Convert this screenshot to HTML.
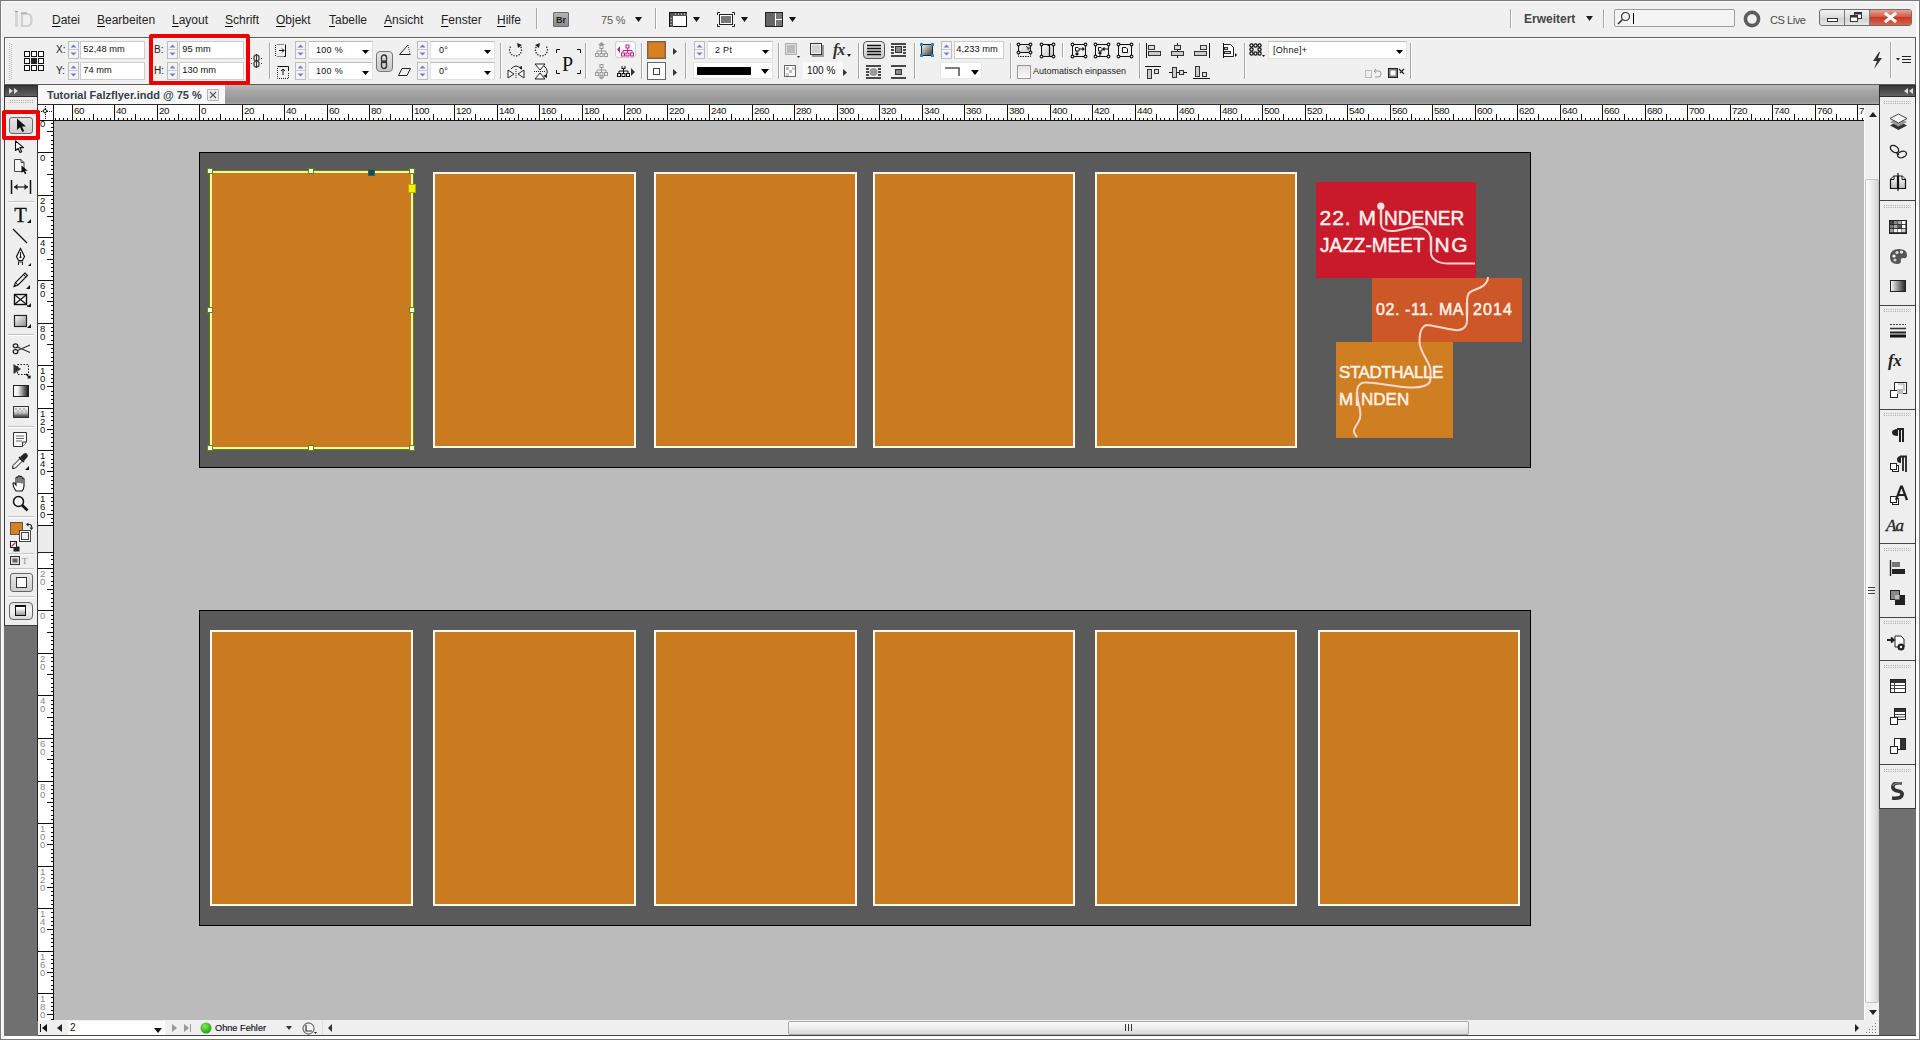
<!DOCTYPE html><html><head><meta charset="utf-8"><style>
*{margin:0;padding:0;box-sizing:border-box}
html,body{width:1920px;height:1040px;overflow:hidden}
body{position:relative;background:#f0f0f0;font-family:"Liberation Sans",sans-serif;color:#000}
.a{position:absolute}
.u{text-decoration:underline;text-underline-offset:2px}
.menu{position:absolute;top:11px;font-size:12px;color:#1a1a1a;line-height:16px}
.menu span{text-decoration:underline}
</style></head><body><div style="position:absolute;left:0px;top:0px;width:1920px;height:1px;background:#7a7a7a"></div><div style="position:absolute;left:0px;top:0px;width:1px;height:1040px;background:#7a7a7a"></div><div style="position:absolute;left:1919px;top:0px;width:1px;height:1040px;background:#7a7a7a"></div><div style="position:absolute;left:0px;top:1039px;width:1920px;height:1px;background:#7a7a7a"></div><div style="position:absolute;left:1px;top:1px;width:1918px;height:1px;background:#fbfbfb"></div><div style="position:absolute;left:1px;top:1px;width:1px;height:1038px;background:#fbfbfb"></div><svg style="position:absolute;left:11px;top:9px;" width="24" height="20" viewBox="0 0 24 20"><rect x="4" y="2" width="3" height="16" fill="#d6d6d6"/><rect x="4" y="2" width="3" height="1" fill="#9a9a9a"/><path d="M11 5H16.5Q20.5 5 20.5 10.5Q20.5 17 16.5 17H11Z" fill="none" stroke="#cfcfcf" stroke-width="2.2"/><path d="M10 4H16" stroke="#999" stroke-width="1"/></svg><div style="position:absolute;left:52px;top:13.84px;font-size:12px;line-height:12px;white-space:nowrap;color:#1e1e1e"><span style="text-decoration:underline;text-decoration-thickness:1px;text-underline-offset:2px;text-decoration-color:#000">D</span>atei</div><div style="position:absolute;left:97px;top:13.84px;font-size:12px;line-height:12px;white-space:nowrap;color:#1e1e1e"><span style="text-decoration:underline;text-decoration-thickness:1px;text-underline-offset:2px;text-decoration-color:#000">B</span>earbeiten</div><div style="position:absolute;left:172px;top:13.84px;font-size:12px;line-height:12px;white-space:nowrap;color:#1e1e1e"><span style="text-decoration:underline;text-decoration-thickness:1px;text-underline-offset:2px;text-decoration-color:#000">L</span>ayout</div><div style="position:absolute;left:225px;top:13.84px;font-size:12px;line-height:12px;white-space:nowrap;color:#1e1e1e"><span style="text-decoration:underline;text-decoration-thickness:1px;text-underline-offset:2px;text-decoration-color:#000">S</span>chrift</div><div style="position:absolute;left:276px;top:13.84px;font-size:12px;line-height:12px;white-space:nowrap;color:#1e1e1e"><span style="text-decoration:underline;text-decoration-thickness:1px;text-underline-offset:2px;text-decoration-color:#000">O</span>bjekt</div><div style="position:absolute;left:329px;top:13.84px;font-size:12px;line-height:12px;white-space:nowrap;color:#1e1e1e"><span style="text-decoration:underline;text-decoration-thickness:1px;text-underline-offset:2px;text-decoration-color:#000">T</span>abelle</div><div style="position:absolute;left:384px;top:13.84px;font-size:12px;line-height:12px;white-space:nowrap;color:#1e1e1e"><span style="text-decoration:underline;text-decoration-thickness:1px;text-underline-offset:2px;text-decoration-color:#000">A</span>nsicht</div><div style="position:absolute;left:441px;top:13.84px;font-size:12px;line-height:12px;white-space:nowrap;color:#1e1e1e"><span style="text-decoration:underline;text-decoration-thickness:1px;text-underline-offset:2px;text-decoration-color:#000">F</span>enster</div><div style="position:absolute;left:497px;top:13.84px;font-size:12px;line-height:12px;white-space:nowrap;color:#1e1e1e"><span style="text-decoration:underline;text-decoration-thickness:1px;text-underline-offset:2px;text-decoration-color:#000">H</span>ilfe</div><div style="position:absolute;left:536px;top:8px;width:1px;height:21px;background:#a8a8a8;box-shadow:1px 0 0 #fdfdfd"></div><div style="position:absolute;left:553px;top:12px;width:16px;height:15px;background:linear-gradient(#b4b4b4,#8c8c8c);border:1px solid #6a6a6a;border-radius:1px"><div style="position:absolute;left:2px;top:2px;font-size:9px;font-weight:bold;color:#222;line-height:10px">Br</div></div><div style="position:absolute;left:601px;top:14.69px;font-size:11px;line-height:11px;white-space:nowrap;color:#5a5a5a;letter-spacing:-0.2px">75 %</div><svg style="position:absolute;left:635px;top:17px;" width="7" height="5" viewBox="0 0 7 5"><path d="M0 0H7L3.5 5Z" fill="#111"/></svg><div style="position:absolute;left:655px;top:8px;width:1px;height:21px;background:#a8a8a8;box-shadow:1px 0 0 #fdfdfd"></div><svg style="position:absolute;left:669px;top:12px;" width="19" height="16" viewBox="0 0 19 16"><rect x="0.5" y="0.5" width="17" height="14" fill="#fff" stroke="#111"/><rect x="1" y="1" width="17" height="3" fill="#555"/><rect x="1" y="1" width="3" height="14" fill="#555"/><path d="M6 2h1M9 2h1M12 2h1M15 2h1M2 6v1M2 9v1M2 12v1" stroke="#fff"/></svg><svg style="position:absolute;left:693px;top:17px;" width="7" height="5" viewBox="0 0 7 5"><path d="M0 0H7L3.5 5Z" fill="#111"/></svg><svg style="position:absolute;left:717px;top:12px;" width="19" height="16" viewBox="0 0 19 16"><path d="M0.5 3V0.5H3M15 0.5H17.5V3M17.5 12V14.5H15M3 14.5H0.5V12" fill="none" stroke="#222"/><rect x="2.5" y="2.5" width="13" height="10" fill="#fff" stroke="#222"/><rect x="4" y="4" width="10" height="7" fill="#777"/></svg><svg style="position:absolute;left:741px;top:17px;" width="7" height="5" viewBox="0 0 7 5"><path d="M0 0H7L3.5 5Z" fill="#111"/></svg><svg style="position:absolute;left:765px;top:12px;" width="19" height="16" viewBox="0 0 19 16"><rect x="0.5" y="0.5" width="17" height="14" fill="#fff" stroke="#222"/><rect x="1" y="1" width="9" height="13" fill="#666"/><rect x="11" y="1" width="6" height="6" fill="#777"/><rect x="11" y="8" width="6" height="6" fill="#777"/></svg><svg style="position:absolute;left:789px;top:17px;" width="7" height="5" viewBox="0 0 7 5"><path d="M0 0H7L3.5 5Z" fill="#111"/></svg><div style="position:absolute;left:1510px;top:9px;width:1px;height:19px;background:#a8a8a8;box-shadow:1px 0 0 #fdfdfd"></div><div style="position:absolute;left:1524px;top:12.84px;font-size:12px;line-height:12px;white-space:nowrap;font-weight:bold;color:#444">Erweitert</div><svg style="position:absolute;left:1586px;top:16px;" width="7" height="5" viewBox="0 0 7 5"><path d="M0 0H7L3.5 5Z" fill="#222"/></svg><div style="position:absolute;left:1603px;top:9px;width:1px;height:19px;background:#a8a8a8;box-shadow:1px 0 0 #fdfdfd"></div><div style="position:absolute;left:1614px;top:9px;width:121px;height:18px;background:#f4f4f4;border:1px solid #9c9c9c;border-radius:2px"></div><svg style="position:absolute;left:1617px;top:11px;" width="14" height="14" viewBox="0 0 14 14"><circle cx="8.5" cy="5.5" r="4" fill="none" stroke="#333" stroke-width="1.2"/><path d="M5.5 8.5L1 13" stroke="#333" stroke-width="1.6"/></svg><div style="position:absolute;left:1633px;top:13px;width:1px;height:11px;background:#000"></div><svg style="position:absolute;left:1743px;top:10px;" width="18" height="18" viewBox="0 0 18 18"><circle cx="9" cy="9" r="6.6" fill="none" stroke="#5e5e5e" stroke-width="3.6"/></svg><div style="position:absolute;left:1770px;top:14.69px;font-size:11px;line-height:11px;white-space:nowrap;color:#4a4a4a;letter-spacing:-0.45px">CS Live</div><div style="position:absolute;left:1819px;top:9px;width:93px;height:17px;border:1px solid #6f6f6f;border-radius:3px;overflow:hidden;background:linear-gradient(#f3f3f3,#dcdcdc 50%,#cfcfcf 51%,#e6e6e6)"><div style="position:absolute;left:24px;top:0;width:1px;height:15px;background:#777"></div><div style="position:absolute;left:49px;top:0;width:1px;height:15px;background:#777"></div><div style="position:absolute;left:50px;top:0;width:41px;height:15px;background:linear-gradient(#e8a296,#d45b4a 45%,#c63a27 50%,#d9644c)"></div><div style="position:absolute;left:7px;top:8px;width:11px;height:4px;border:1px solid #333;background:#fff"></div><svg style="position:absolute;left:30px;top:2px" width="13" height="11"><rect x="4.5" y="0.5" width="7" height="6" fill="#fff" stroke="#333"/><rect x="0.5" y="3.5" width="7" height="6" fill="#fff" stroke="#333"/><rect x="1" y="4" width="6" height="1.5" fill="#333"/><rect x="5" y="1" width="6" height="1.5" fill="#333"/></svg><svg style="position:absolute;left:63px;top:2px" width="15" height="11"><path d="M2 1L13 10M13 1L2 10" stroke="#fff" stroke-width="3"/><path d="M2 1L13 10M13 1L2 10" stroke="#fff" stroke-width="2" /></svg></div><div style="position:absolute;left:4px;top:37px;width:1912px;height:48px;border:1px solid #5d5d5d;background:#f0f0f0;box-shadow:inset 1px 1px 0 #fff"></div><svg style="position:absolute;left:9px;top:43px;" width="4" height="37" viewBox="0 0 4 37"><path d="M0.5 0V37M2.5 1V37" stroke="#b5b5b5" stroke-dasharray="1 1"/></svg><svg style="position:absolute;left:24px;top:51px;" width="20" height="20" viewBox="0 0 20 20"><rect x="0.5" y="0.5" width="5" height="5" fill="#fff" stroke="#111"/><rect x="0.5" y="7.5" width="5" height="5" fill="#fff" stroke="#111"/><rect x="0.5" y="14.5" width="5" height="5" fill="#fff" stroke="#111"/><rect x="7.5" y="0.5" width="5" height="5" fill="#fff" stroke="#111"/><rect x="7.5" y="7.5" width="5" height="5" fill="#222" stroke="#222"/><rect x="7.5" y="14.5" width="5" height="5" fill="#fff" stroke="#111"/><rect x="14.5" y="0.5" width="5" height="5" fill="#fff" stroke="#111"/><rect x="14.5" y="7.5" width="5" height="5" fill="#fff" stroke="#111"/><rect x="14.5" y="14.5" width="5" height="5" fill="#fff" stroke="#111"/></svg><div style="position:absolute;left:56px;top:45.03px;font-size:10px;line-height:10px;white-space:nowrap;color:#222">X:</div><div style="position:absolute;left:56px;top:66.03px;font-size:10px;line-height:10px;white-space:nowrap;color:#222">Y:</div><div style="position:absolute;left:68px;top:41px;width:11px;height:18px;border:1px solid #bdbdbd;background:#f4f4f4"><svg style="position:absolute;left:0;top:0" width="9" height="16"><path d="M1.5 5.5H7.5L4.5 2.5Z" fill="#7a7ac8"/><path d="M1.5 10.5H7.5L4.5 13.5Z" fill="#7a7ac8"/><path d="M0 7.5H9" stroke="#c8c8c8"/></svg></div><div style="position:absolute;left:68px;top:62px;width:11px;height:18px;border:1px solid #bdbdbd;background:#f4f4f4"><svg style="position:absolute;left:0;top:0" width="9" height="16"><path d="M1.5 5.5H7.5L4.5 2.5Z" fill="#7a7ac8"/><path d="M1.5 10.5H7.5L4.5 13.5Z" fill="#7a7ac8"/><path d="M0 7.5H9" stroke="#c8c8c8"/></svg></div><div style="position:absolute;left:80px;top:41px;width:65px;height:18px;background:#fff;border:1px solid #cdcdcd;"><div style="position:absolute;left:2.3px;top:2.93px;font-size:9.3px;line-height:9.3px;white-space:nowrap;color:#111">52,48 mm</div></div><div style="position:absolute;left:80px;top:62px;width:65px;height:18px;background:#fff;border:1px solid #cdcdcd;"><div style="position:absolute;left:2.3px;top:2.93px;font-size:9.3px;line-height:9.3px;white-space:nowrap;color:#111">74 mm</div></div><div style="position:absolute;left:154px;top:45.03px;font-size:10px;line-height:10px;white-space:nowrap;color:#222">B:</div><div style="position:absolute;left:154px;top:66.03px;font-size:10px;line-height:10px;white-space:nowrap;color:#222">H:</div><div style="position:absolute;left:167px;top:41px;width:11px;height:18px;border:1px solid #bdbdbd;background:#f4f4f4"><svg style="position:absolute;left:0;top:0" width="9" height="16"><path d="M1.5 5.5H7.5L4.5 2.5Z" fill="#7a7ac8"/><path d="M1.5 10.5H7.5L4.5 13.5Z" fill="#7a7ac8"/><path d="M0 7.5H9" stroke="#c8c8c8"/></svg></div><div style="position:absolute;left:167px;top:62px;width:11px;height:18px;border:1px solid #bdbdbd;background:#f4f4f4"><svg style="position:absolute;left:0;top:0" width="9" height="16"><path d="M1.5 5.5H7.5L4.5 2.5Z" fill="#7a7ac8"/><path d="M1.5 10.5H7.5L4.5 13.5Z" fill="#7a7ac8"/><path d="M0 7.5H9" stroke="#c8c8c8"/></svg></div><div style="position:absolute;left:179px;top:41px;width:65px;height:18px;background:#fff;border:1px solid #cdcdcd;"><div style="position:absolute;left:2.3px;top:2.93px;font-size:9.3px;line-height:9.3px;white-space:nowrap;color:#111">95 mm</div></div><div style="position:absolute;left:179px;top:62px;width:65px;height:18px;background:#fff;border:1px solid #cdcdcd;"><div style="position:absolute;left:2.3px;top:2.93px;font-size:9.3px;line-height:9.3px;white-space:nowrap;color:#111">130 mm</div></div><svg style="position:absolute;left:250px;top:54px;" width="13" height="15" viewBox="0 0 13 15"><path d="M1 4.5h1M1 9.5h1M11 4.5h1M11 9.5h1" stroke="#333"/><rect x="4" y="1" width="5" height="6" rx="2.5" fill="none" stroke="#555" stroke-width="1.5"/><rect x="4" y="7" width="5" height="6" rx="2.5" fill="none" stroke="#555" stroke-width="1.5"/><path d="M6.5 0V14" stroke="#333"/></svg><div style="position:absolute;left:269px;top:43px;width:1px;height:36px;background:#a8a8a8;box-shadow:1px 0 0 #fdfdfd"></div><svg style="position:absolute;left:275px;top:44px;" width="14" height="14" viewBox="0 0 14 14"><path d="M0.5 1V12M2.5 0.5H9M2.5 12.5H9" stroke="#222" stroke-dasharray="1 1"/><path d="M10.5 0.5V12.5H9" stroke="#111" fill="none"/><path d="M4 6.5H9M7 4.5L9 6.5L7 8.5" stroke="#111" fill="none"/></svg><svg style="position:absolute;left:277px;top:66px;" width="13" height="13" viewBox="0 0 13 13"><path d="M0.5 0.5H11.5V5" stroke="#111" fill="none"/><path d="M0.5 2V12.5H12" stroke="#222" stroke-dasharray="1 1" fill="none"/><path d="M6 9V3M4 5L6 3L8 5" stroke="#111" fill="none"/><path d="M11.5 7V12" stroke="#222" stroke-dasharray="1 1"/></svg><div style="position:absolute;left:295px;top:41px;width:11px;height:18px;border:1px solid #bdbdbd;background:#f4f4f4"><svg style="position:absolute;left:0;top:0" width="9" height="16"><path d="M1.5 5.5H7.5L4.5 2.5Z" fill="#7a7ac8"/><path d="M1.5 10.5H7.5L4.5 13.5Z" fill="#7a7ac8"/><path d="M0 7.5H9" stroke="#c8c8c8"/></svg></div><div style="position:absolute;left:295px;top:62px;width:11px;height:18px;border:1px solid #bdbdbd;background:#f4f4f4"><svg style="position:absolute;left:0;top:0" width="9" height="16"><path d="M1.5 5.5H7.5L4.5 2.5Z" fill="#7a7ac8"/><path d="M1.5 10.5H7.5L4.5 13.5Z" fill="#7a7ac8"/><path d="M0 7.5H9" stroke="#c8c8c8"/></svg></div><div style="position:absolute;left:308px;top:41px;width:65px;height:18px;background:#fff;border:1px solid #e0e0e0;border-top-color:#bcbcbc"><div style="position:absolute;left:7px;top:4.18px;font-size:9px;line-height:9px;white-space:nowrap;color:#111;letter-spacing:0.3px">100 %</div><svg style="position:absolute;left:53px;top:8px;" width="7" height="4" viewBox="0 0 7 4"><path d="M0 0H7L3.5 4Z" fill="#000"/></svg></div><div style="position:absolute;left:308px;top:62px;width:65px;height:18px;background:#fff;border:1px solid #e0e0e0;border-top-color:#bcbcbc"><div style="position:absolute;left:7px;top:4.18px;font-size:9px;line-height:9px;white-space:nowrap;color:#111;letter-spacing:0.3px">100 %</div><svg style="position:absolute;left:53px;top:8px;" width="7" height="4" viewBox="0 0 7 4"><path d="M0 0H7L3.5 4Z" fill="#000"/></svg></div><div style="position:absolute;left:376px;top:51px;width:17px;height:21px;border:1px solid #777;border-radius:4px;background:linear-gradient(#e6e6e6,#c8c8c8)"><svg style="position:absolute;left:3px;top:2px" width="9" height="16"><rect x="1.5" y="1" width="5" height="7.5" rx="2.5" fill="none" stroke="#333" stroke-width="1.4"/><rect x="1.5" y="7" width="5" height="7.5" rx="2.5" fill="none" stroke="#333" stroke-width="1.4"/></svg></div><svg style="position:absolute;left:399px;top:44px;" width="12" height="11" viewBox="0 0 12 11"><path d="M0.5 10.5H11.5M0.5 10.5L9 1" fill="none" stroke="#222"/><path d="M9 1L11 10" stroke="#333" stroke-dasharray="1 1"/></svg><svg style="position:absolute;left:398px;top:68px;" width="13" height="8" viewBox="0 0 13 8"><path d="M0.5 7.5L4 0.5H12.5L9 7.5Z" fill="none" stroke="#222"/></svg><div style="position:absolute;left:417px;top:41px;width:11px;height:18px;border:1px solid #bdbdbd;background:#f4f4f4"><svg style="position:absolute;left:0;top:0" width="9" height="16"><path d="M1.5 5.5H7.5L4.5 2.5Z" fill="#7a7ac8"/><path d="M1.5 10.5H7.5L4.5 13.5Z" fill="#7a7ac8"/><path d="M0 7.5H9" stroke="#c8c8c8"/></svg></div><div style="position:absolute;left:417px;top:62px;width:11px;height:18px;border:1px solid #bdbdbd;background:#f4f4f4"><svg style="position:absolute;left:0;top:0" width="9" height="16"><path d="M1.5 5.5H7.5L4.5 2.5Z" fill="#7a7ac8"/><path d="M1.5 10.5H7.5L4.5 13.5Z" fill="#7a7ac8"/><path d="M0 7.5H9" stroke="#c8c8c8"/></svg></div><div style="position:absolute;left:430px;top:41px;width:65px;height:18px;background:#fff;border:1px solid #e0e0e0;border-top-color:#bcbcbc"><div style="position:absolute;left:8px;top:4.18px;font-size:9px;line-height:9px;white-space:nowrap;color:#111;letter-spacing:0.3px">0°</div><svg style="position:absolute;left:53px;top:8px;" width="7" height="4" viewBox="0 0 7 4"><path d="M0 0H7L3.5 4Z" fill="#000"/></svg></div><div style="position:absolute;left:430px;top:62px;width:65px;height:18px;background:#fff;border:1px solid #e0e0e0;border-top-color:#bcbcbc"><div style="position:absolute;left:8px;top:4.18px;font-size:9px;line-height:9px;white-space:nowrap;color:#111;letter-spacing:0.3px">0°</div><svg style="position:absolute;left:53px;top:8px;" width="7" height="4" viewBox="0 0 7 4"><path d="M0 0H7L3.5 4Z" fill="#000"/></svg></div><div style="position:absolute;left:500px;top:43px;width:1px;height:36px;background:#a8a8a8;box-shadow:1px 0 0 #fdfdfd"></div><svg style="position:absolute;left:508px;top:42px;" width="16" height="15" viewBox="0 0 16 15"><path d="M11 3A6 6 0 1 1 3 4" fill="none" stroke="#222" stroke-width="1.3" stroke-dasharray="1.3 1.3"/><path d="M9 1L14 3L10 6Z" fill="#222"/></svg><svg style="position:absolute;left:533px;top:42px;" width="16" height="15" viewBox="0 0 16 15"><path d="M5 3A6 6 0 1 0 13 4" fill="none" stroke="#222" stroke-width="1.3" stroke-dasharray="1.3 1.3"/><path d="M7 1L2 3L6 6Z" fill="#222"/></svg><svg style="position:absolute;left:507px;top:64px;" width="18" height="15" viewBox="0 0 18 15"><path d="M1 6V14L7 10Z M17 6V14L11 10Z" fill="#fff" stroke="#222"/><path d="M9 5V15" stroke="#222" stroke-dasharray="1 1"/><path d="M4 5Q9 -1 14 5" fill="none" stroke="#222"/><path d="M12 3L15 6L15 2Z" fill="#222"/></svg><svg style="position:absolute;left:533px;top:63px;" width="17" height="17" viewBox="0 0 17 17"><path d="M2 1H12L7 7Z M2 16H12L7 10Z" fill="#fff" stroke="#222"/><path d="M1 8.5H12" stroke="#222" stroke-dasharray="1 1"/><path d="M11 3Q17 8 12 14" fill="none" stroke="#222"/><path d="M10 13L14 15L14 11Z" fill="#222"/></svg><svg style="position:absolute;left:556px;top:49px;" width="26" height="26" viewBox="0 0 26 26"><path d="M0.5 4V0.5H4M21 0.5H24.5V4M24.5 21V24.5H21M4 24.5H0.5V21" fill="none" stroke="#111"/></svg><div style="position:absolute;left:562px;top:53.57px;font-size:20px;line-height:20px;white-space:nowrap;font-family:Liberation Serif;color:#111">P</div><div style="position:absolute;left:585px;top:43px;width:1px;height:36px;background:#a8a8a8;box-shadow:1px 0 0 #fdfdfd"></div><svg style="position:absolute;left:595px;top:42px;" width="13" height="15" viewBox="0 0 13 15"><path d="M3 3L6.5 0L10 3Z" fill="#999"/><g transform="translate(0.5,3)"><rect x="4.5" y="0.5" width="3" height="3" fill="none" stroke="#999"/><path d="M6 4V6M1.5 6H10.5M1.5 6V8M6 6V8M10.5 6V8" stroke="#999" fill="none"/><rect x="0" y="8.5" width="3" height="3" fill="none" stroke="#999"/><rect x="4.5" y="8.5" width="3" height="3" fill="none" stroke="#999"/><rect x="9" y="8.5" width="3" height="3" fill="none" stroke="#999"/></g></svg><svg style="position:absolute;left:595px;top:64px;" width="13" height="16" viewBox="0 0 13 16"><g transform="translate(0.5,0)"><rect x="4.5" y="0.5" width="3" height="3" fill="none" stroke="#999"/><path d="M6 4V6M1.5 6H10.5M1.5 6V8M6 6V8M10.5 6V8" stroke="#999" fill="none"/><rect x="0" y="8.5" width="3" height="3" fill="none" stroke="#999"/><rect x="4.5" y="8.5" width="3" height="3" fill="none" stroke="#999"/><rect x="9" y="8.5" width="3" height="3" fill="none" stroke="#999"/></g><path d="M3 12.5L6.5 15.5L10 12.5Z" fill="#999"/></svg><div style="position:absolute;left:615px;top:41px;width:21px;height:17px;border:1px solid #cfcfcf;border-radius:3px;background:#fafafa"><svg style="position:absolute;left:1px;top:2px" width="18" height="13"><path d="M0 5.5L3 2V9Z" fill="#c0208f"/><g transform="translate(4.5,0.5)"><rect x="4.5" y="0.5" width="3" height="3" fill="none" stroke="#c0208f"/><path d="M6 4V6M1.5 6H10.5M1.5 6V8M6 6V8M10.5 6V8" stroke="#c0208f" fill="none"/><rect x="0" y="8.5" width="3" height="3" fill="none" stroke="#c0208f"/><rect x="4.5" y="8.5" width="3" height="3" fill="none" stroke="#c0208f"/><rect x="9" y="8.5" width="3" height="3" fill="none" stroke="#c0208f"/></g></svg></div><svg style="position:absolute;left:617px;top:66px;" width="19" height="12" viewBox="0 0 19 12"><g transform="translate(0.5,-1)"><rect x="4.5" y="0.5" width="3" height="3" fill="none" stroke="#111"/><path d="M6 4V6M1.5 6H10.5M1.5 6V8M6 6V8M10.5 6V8" stroke="#111" fill="none"/><rect x="0" y="8.5" width="3" height="3" fill="none" stroke="#111"/><rect x="4.5" y="8.5" width="3" height="3" fill="none" stroke="#111"/><rect x="9" y="8.5" width="3" height="3" fill="none" stroke="#111"/></g><path d="M14 2V10L18 6Z" fill="#333"/></svg><div style="position:absolute;left:641px;top:43px;width:1px;height:36px;background:#a8a8a8;box-shadow:1px 0 0 #fdfdfd"></div><div style="position:absolute;left:647px;top:41px;width:19px;height:18px;border:1px solid #666;background:#d7801f;box-shadow:inset 0 0 0 1px #c07020"></div><div style="position:absolute;left:647px;top:62px;width:19px;height:18px;border:1px solid #666;background:#fff"><div style="position:absolute;left:5px;top:5px;width:7px;height:7px;border:1px solid #444"></div></div><svg style="position:absolute;left:673px;top:48px;" width="4" height="7" viewBox="0 0 4 7"><path d="M0 0V7L4 3.5Z" fill="#333"/></svg><svg style="position:absolute;left:673px;top:69px;" width="4" height="7" viewBox="0 0 4 7"><path d="M0 0V7L4 3.5Z" fill="#333"/></svg><div style="position:absolute;left:685px;top:43px;width:1px;height:36px;background:#a8a8a8;box-shadow:1px 0 0 #fdfdfd"></div><div style="position:absolute;left:694px;top:41px;width:11px;height:18px;border:1px solid #bdbdbd;background:#f4f4f4"><svg style="position:absolute;left:0;top:0" width="9" height="16"><path d="M1.5 5.5H7.5L4.5 2.5Z" fill="#7a7ac8"/><path d="M1.5 10.5H7.5L4.5 13.5Z" fill="#7a7ac8"/><path d="M0 7.5H9" stroke="#c8c8c8"/></svg></div><div style="position:absolute;left:707px;top:41px;width:66px;height:18px;background:#fff;border:1px solid #e0e0e0;border-top-color:#bcbcbc"><div style="position:absolute;left:7px;top:4.18px;font-size:9px;line-height:9px;white-space:nowrap;color:#111;letter-spacing:0.3px">2 Pt</div><svg style="position:absolute;left:54px;top:8px;" width="7" height="4" viewBox="0 0 7 4"><path d="M0 0H7L3.5 4Z" fill="#000"/></svg></div><div style="position:absolute;left:693px;top:62px;width:80px;height:17px;background:#fff;border:1px solid #e2e2e2"><div style="position:absolute;left:3px;top:4px;width:54px;height:8px;background:#000"></div><svg style="position:absolute;left:67px;top:6px;" width="8" height="5" viewBox="0 0 8 5"><path d="M0 0H8L4.0 5Z" fill="#000"/></svg></div><div style="position:absolute;left:778px;top:43px;width:1px;height:36px;background:#a8a8a8;box-shadow:1px 0 0 #fdfdfd"></div><svg style="position:absolute;left:785px;top:43px;" width="16" height="16" viewBox="0 0 16 16"><rect x="0.5" y="0.5" width="11" height="11" fill="#ddd" stroke="#777" stroke-dasharray="1 1"/><rect x="2" y="2" width="8" height="8" fill="#bbb"/><path d="M12 13L15 13L13.5 15Z" fill="#222"/></svg><svg style="position:absolute;left:810px;top:43px;" width="16" height="16" viewBox="0 0 16 16"><rect x="2" y="2" width="12" height="12" fill="#444" opacity="0.5"/><rect x="0.5" y="0.5" width="11" height="11" fill="#f2f2f2" stroke="#333"/><rect x="2" y="2" width="8" height="8" fill="#d2d2d2"/></svg><div style="position:absolute;left:833px;top:42.46px;font-size:16px;line-height:16px;white-space:nowrap;font-family:Liberation Serif;font-weight:bold;color:#333;letter-spacing:-1px"><i>fx</i></div><svg style="position:absolute;left:847px;top:54px;" width="4" height="3" viewBox="0 0 4 3"><path d="M0 0H4L2.0 3Z" fill="#222"/></svg><svg style="position:absolute;left:784px;top:65px;" width="13" height="13" viewBox="0 0 13 13"><rect x="0.5" y="0.5" width="11" height="11" fill="#fff" stroke="#666"/><rect x="2" y="2" width="3" height="3" fill="#bbb"/><rect x="5" y="5" width="3" height="3" fill="#bbb"/><rect x="8" y="2" width="3" height="3" fill="#ccc"/><rect x="2" y="8" width="3" height="3" fill="#ccc"/></svg><div style="position:absolute;left:803px;top:62px;width:40px;height:17px;background:#fafafa"><div style="position:absolute;left:4px;top:4.04px;font-size:10px;line-height:10px;white-space:nowrap;color:#111">100 %</div></div><svg style="position:absolute;left:843px;top:69px;" width="4" height="7" viewBox="0 0 4 7"><path d="M0 0V7L4 3.5Z" fill="#333"/></svg><div style="position:absolute;left:858px;top:43px;width:1px;height:36px;background:#a8a8a8;box-shadow:1px 0 0 #fdfdfd"></div><div style="position:absolute;left:863px;top:41px;width:22px;height:18px;border:1px solid #555;border-radius:4px;background:linear-gradient(#f0f0f0,#c8c8c8)"><svg style="position:absolute;left:3px;top:2px" width="15" height="13"><path d="M0 1.5H14M0 4.5H14M0 7.5H14M0 10.5H14" stroke="#111" stroke-width="1.6"/></svg></div><svg style="position:absolute;left:891px;top:43px;" width="16" height="14" viewBox="0 0 16 14"><path d="M0 1H15M0 13H15M0 4H3M0 7H3M0 10H3M12 4H15M12 7H15M12 10H15" stroke="#111" stroke-width="1.3"/><rect x="4.5" y="3.5" width="6" height="6" fill="#888" stroke="#333"/></svg><svg style="position:absolute;left:866px;top:65px;" width="16" height="14" viewBox="0 0 16 14"><path d="M0 1H15M0 13H15M0 4H3M0 7H3M0 10H3M12 4H15M12 7H15M12 10H15" stroke="#111" stroke-width="1.3"/><circle cx="7.5" cy="7" r="4" fill="#999"/></svg><svg style="position:absolute;left:891px;top:65px;" width="16" height="15" viewBox="0 0 16 15"><path d="M0 1H15M0 13H15" stroke="#111" stroke-width="1.3"/><rect x="4.5" y="4.5" width="6" height="5" fill="#888" stroke="#333"/></svg><div style="position:absolute;left:914px;top:43px;width:1px;height:36px;background:#a8a8a8;box-shadow:1px 0 0 #fdfdfd"></div><svg style="position:absolute;left:919px;top:42px;" width="16" height="16" viewBox="0 0 16 16"><defs><linearGradient id="cg" x1="0" y1="0" x2="1" y2="1"><stop offset="0" stop-color="#fafafa"/><stop offset="1" stop-color="#333"/></linearGradient></defs><rect x="2.5" y="2.5" width="11" height="11" fill="url(#cg)" stroke="#222"/><rect x="1" y="1" width="3" height="3" fill="#1e90d8"/><rect x="12" y="1" width="3" height="3" fill="#1e90d8"/><rect x="1" y="12" width="3" height="3" fill="#1e90d8"/><rect x="12" y="12" width="3" height="3" fill="#1e90d8"/></svg><div style="position:absolute;left:941px;top:41px;width:11px;height:18px;border:1px solid #bdbdbd;background:#f4f4f4"><svg style="position:absolute;left:0;top:0" width="9" height="16"><path d="M1.5 5.5H7.5L4.5 2.5Z" fill="#7a7ac8"/><path d="M1.5 10.5H7.5L4.5 13.5Z" fill="#7a7ac8"/><path d="M0 7.5H9" stroke="#c8c8c8"/></svg></div><div style="position:absolute;left:954px;top:41px;width:50px;height:18px;background:#fff;border:1px solid #cdcdcd;"><div style="position:absolute;left:1.3px;top:2.93px;font-size:9.3px;line-height:9.3px;white-space:nowrap;color:#111">4,233 mm</div></div><div style="position:absolute;left:940px;top:62px;width:42px;height:17px;background:#fff;border:1px solid #e6e6e6"><svg style="position:absolute;left:4px;top:4px" width="18" height="10"><path d="M0 1H14V9" fill="none" stroke="#555" stroke-width="1.6"/></svg><svg style="position:absolute;left:30px;top:7px;" width="8" height="5" viewBox="0 0 8 5"><path d="M0 0H8L4.0 5Z" fill="#000"/></svg></div><div style="position:absolute;left:1010px;top:43px;width:1px;height:36px;background:#a8a8a8;box-shadow:1px 0 0 #fdfdfd"></div><svg style="position:absolute;left:1016px;top:42px;" width="18" height="17" viewBox="0 0 18 17"><defs><linearGradient id="fg" x1="0" y1="0" x2="1" y2="1"><stop offset="0" stop-color="#fafafa"/><stop offset="1" stop-color="#c4c4c4"/></linearGradient></defs><rect x="2.5" y="2.5" width="12" height="8" fill="url(#fg)" stroke="#111"/><path d="M2.5 11V14.5H14.5V11" fill="none" stroke="#111" stroke-dasharray="1.5 1"/><path d="M10 4L13 7M13 5V7H11" fill="none" stroke="#333"/><circle cx="2.5" cy="2.5" r="1.4" fill="#fff" stroke="#111" stroke-width="1.1"/><circle cx="14.5" cy="2.5" r="1.4" fill="#fff" stroke="#111" stroke-width="1.1"/><circle cx="2.5" cy="10.5" r="1.4" fill="#fff" stroke="#111" stroke-width="1.1"/><circle cx="14.5" cy="10.5" r="1.4" fill="#fff" stroke="#111" stroke-width="1.1"/></svg><svg style="position:absolute;left:1039px;top:42px;" width="17" height="17" viewBox="0 0 17 17"><defs><linearGradient id="fg" x1="0" y1="0" x2="1" y2="1"><stop offset="0" stop-color="#fafafa"/><stop offset="1" stop-color="#c4c4c4"/></linearGradient></defs><rect x="2.5" y="2.5" width="12" height="12" fill="url(#fg)" stroke="#111"/><path d="M8.5 3.5H10.5V14.5" fill="none" stroke="#111" stroke-width="1.2"/><circle cx="2.5" cy="2.5" r="1.4" fill="#fff" stroke="#111" stroke-width="1.1"/><circle cx="14.5" cy="2.5" r="1.4" fill="#fff" stroke="#111" stroke-width="1.1"/><circle cx="2.5" cy="14.5" r="1.4" fill="#fff" stroke="#111" stroke-width="1.1"/><circle cx="14.5" cy="14.5" r="1.4" fill="#fff" stroke="#111" stroke-width="1.1"/></svg><div style="position:absolute;left:1062px;top:43px;width:1px;height:14px;background:#a8a8a8;box-shadow:1px 0 0 #fdfdfd"></div><svg style="position:absolute;left:1070px;top:42px;" width="18" height="17" viewBox="0 0 18 17"><rect x="2.5" y="2.5" width="13" height="12" fill="#f0f0f0" stroke="#111"/><path d="M5.5 5.5H8L9 6.5V9H5.5Z" fill="#fff" stroke="#111"/><path d="M7 9V13M5.5 11.5L7 13L8.5 11.5M9 7H14M12.5 5.5L14 7L12.5 8.5" fill="none" stroke="#111" stroke-width="1.1"/><circle cx="2.5" cy="2.5" r="1.4" fill="#fff" stroke="#111" stroke-width="1.1"/><circle cx="15.5" cy="2.5" r="1.4" fill="#fff" stroke="#111" stroke-width="1.1"/><circle cx="2.5" cy="14.5" r="1.4" fill="#fff" stroke="#111" stroke-width="1.1"/><circle cx="15.5" cy="14.5" r="1.4" fill="#fff" stroke="#111" stroke-width="1.1"/></svg><svg style="position:absolute;left:1093px;top:42px;" width="18" height="17" viewBox="0 0 18 17"><rect x="2.5" y="2.5" width="13" height="12" fill="#f0f0f0" stroke="#111"/><path d="M5.5 5.5H8L9 6.5V9H5.5Z" fill="#fff" stroke="#111"/><path d="M7 10V14M5.5 11.5L7 10L8.5 11.5M10 7H15M11.5 5.5L10 7L11.5 8.5" fill="none" stroke="#111" stroke-width="1.1"/><circle cx="2.5" cy="2.5" r="1.4" fill="#fff" stroke="#111" stroke-width="1.1"/><circle cx="15.5" cy="2.5" r="1.4" fill="#fff" stroke="#111" stroke-width="1.1"/><circle cx="2.5" cy="14.5" r="1.4" fill="#fff" stroke="#111" stroke-width="1.1"/><circle cx="15.5" cy="14.5" r="1.4" fill="#fff" stroke="#111" stroke-width="1.1"/></svg><svg style="position:absolute;left:1116px;top:42px;" width="18" height="17" viewBox="0 0 18 17"><rect x="2.5" y="2.5" width="13" height="12" fill="#f0f0f0" stroke="#111"/><path d="M6.5 5.5H10L11.5 7V10.5H6.5Z" fill="#fff" stroke="#111"/><circle cx="2.5" cy="2.5" r="1.4" fill="#fff" stroke="#111" stroke-width="1.1"/><circle cx="15.5" cy="2.5" r="1.4" fill="#fff" stroke="#111" stroke-width="1.1"/><circle cx="2.5" cy="14.5" r="1.4" fill="#fff" stroke="#111" stroke-width="1.1"/><circle cx="15.5" cy="14.5" r="1.4" fill="#fff" stroke="#111" stroke-width="1.1"/></svg><div style="position:absolute;left:1017px;top:65px;width:14px;height:14px;border:1px solid #9a9a9a;background:linear-gradient(#e2e2e2,#fafafa)"></div><div style="position:absolute;left:1033px;top:67.38px;font-size:9px;line-height:9px;white-space:nowrap;color:#222">Automatisch einpassen</div><div style="position:absolute;left:1139px;top:43px;width:1px;height:36px;background:#a8a8a8;box-shadow:1px 0 0 #fdfdfd"></div><svg style="position:absolute;left:1145px;top:43px;" width="17" height="15" viewBox="0 0 17 15"><path d="M1.5 0V15" stroke="#111"/><rect x="3.5" y="2.5" width="6" height="4" fill="#ddd" stroke="#333"/><rect x="3.5" y="8.5" width="12" height="4" fill="#ccc" stroke="#333"/></svg><svg style="position:absolute;left:1170px;top:43px;" width="15" height="15" viewBox="0 0 15 15"><path d="M7.5 0V15" stroke="#111"/><rect x="4.5" y="2.5" width="6" height="4" fill="#ddd" stroke="#333"/><rect x="1.5" y="8.5" width="12" height="4" fill="#ccc" stroke="#333"/></svg><svg style="position:absolute;left:1194px;top:43px;" width="16" height="15" viewBox="0 0 16 15"><path d="M15.5 0V15" stroke="#111"/><rect x="6.5" y="2.5" width="6" height="4" fill="#ddd" stroke="#333"/><rect x="0.5" y="8.5" width="12" height="4" fill="#ccc" stroke="#333"/></svg><svg style="position:absolute;left:1222px;top:43px;" width="17" height="16" viewBox="0 0 17 16"><path d="M1.5 0V15" stroke="#111"/><path d="M2 1.5H8.5L11.5 4.5V13.5H2" fill="#fff" stroke="#222"/><rect x="2.5" y="4.5" width="3" height="2" fill="#ccc" stroke="#333"/><rect x="2.5" y="8.5" width="6" height="2" fill="#ccc" stroke="#333"/><path d="M13 10V14L15 12Z" fill="#111"/></svg><svg style="position:absolute;left:1145px;top:66px;" width="17" height="13" viewBox="0 0 17 13"><path d="M0 0.5H16" stroke="#111"/><rect x="2.5" y="3.5" width="4" height="9" fill="#ccc" stroke="#333"/><rect x="9.5" y="3.5" width="4" height="4" fill="#ddd" stroke="#333"/></svg><svg style="position:absolute;left:1169px;top:66px;" width="18" height="13" viewBox="0 0 18 13"><path d="M0 6.5H18" stroke="#111"/><rect x="3.5" y="1.5" width="4" height="10" fill="#ccc" stroke="#333"/><rect x="10.5" y="4.5" width="4" height="4" fill="#ddd" stroke="#333"/></svg><svg style="position:absolute;left:1193px;top:66px;" width="18" height="13" viewBox="0 0 18 13"><path d="M0 12.5H17" stroke="#111"/><rect x="2.5" y="0.5" width="4" height="10" fill="#ccc" stroke="#333"/><rect x="9.5" y="6.5" width="4" height="4" fill="#ddd" stroke="#333"/></svg><div style="position:absolute;left:1244px;top:43px;width:1px;height:36px;background:#a8a8a8;box-shadow:1px 0 0 #fdfdfd"></div><svg style="position:absolute;left:1249px;top:43px;" width="17" height="16" viewBox="0 0 17 16"><g fill="#fff" stroke="#111" stroke-width="1.3"><circle cx="2.5" cy="2.5" r="1.6"/><circle cx="6.5" cy="2.5" r="1.6"/><circle cx="10.5" cy="2.5" r="1.6"/><circle cx="2.5" cy="6.5" r="1.6"/><circle cx="10.5" cy="6.5" r="1.6"/><circle cx="2.5" cy="10.5" r="1.6"/><circle cx="6.5" cy="10.5" r="1.6"/><circle cx="10.5" cy="10.5" r="1.6"/></g><path d="M13 12H16L14.5 14Z" fill="#111"/></svg><div style="position:absolute;left:1268px;top:41px;width:139px;height:18px;background:#fff;border:1px solid #e0e0e0;border-top-color:#bcbcbc"><div style="position:absolute;left:4px;top:4.18px;font-size:9px;line-height:9px;white-space:nowrap;color:#111;letter-spacing:0.3px">[Ohne]+</div><svg style="position:absolute;left:127px;top:8px;" width="7" height="4" viewBox="0 0 7 4"><path d="M0 0H7L3.5 4Z" fill="#000"/></svg></div><svg style="position:absolute;left:1365px;top:68px;" width="17" height="11" viewBox="0 0 17 11"><rect x="0.5" y="2.5" width="6" height="7" fill="#eee" stroke="#bbb"/><path d="M10 3H14Q16 3 16 6Q16 9 13 9H10M11 1L9 3L11 5" fill="none" stroke="#999"/></svg><svg style="position:absolute;left:1388px;top:67px;" width="17" height="12" viewBox="0 0 17 12"><rect x="0.5" y="1.5" width="9" height="9" fill="#777" stroke="#222"/><rect x="2.5" y="3.5" width="5" height="5" fill="#fff"/><path d="M11 2L16 7M16 2L12 6" stroke="#222" stroke-width="1.2"/></svg><div style="position:absolute;left:1410px;top:43px;width:1px;height:36px;background:#a8a8a8;box-shadow:1px 0 0 #fdfdfd"></div><svg style="position:absolute;left:1871px;top:52px;" width="12" height="18" viewBox="0 0 12 18"><path d="M8 0L2 9H6L3 17L11 6H7L9 0Z" fill="#333"/></svg><div style="position:absolute;left:1890px;top:42px;width:1px;height:36px;background:#a8a8a8;box-shadow:1px 0 0 #fdfdfd"></div><svg style="position:absolute;left:1896px;top:55px;" width="16" height="9" viewBox="0 0 16 9"><path d="M0 3H4L2 5.5Z" fill="#222"/><path d="M6 1.5H15M6 4.5H15M6 7.5H15" stroke="#222" stroke-width="1"/></svg><div style="position:absolute;left:149px;top:34px;width:101px;height:51px;border:4px solid #ee0000;border-radius:2px"></div><div style="position:absolute;left:4px;top:85px;width:34px;height:951px;background:#707070"></div><div style="position:absolute;left:1879px;top:85px;width:37px;height:951px;background:#707070"></div><div style="position:absolute;left:38px;top:85px;width:1841px;height:19px;background:linear-gradient(#b9b9b9,#a3a3a3 40%,#959595 85%,#a9a9a9)"></div><div style="position:absolute;left:38px;top:85px;width:187px;height:19px;background:#f8f8f8"></div><div style="position:absolute;left:47px;top:89.69px;font-size:11px;line-height:11px;white-space:nowrap;font-weight:bold;color:#35414d">Tutorial Falzflyer.indd @ 75 %</div><div style="position:absolute;left:207px;top:89px;width:12px;height:12px;border:1px solid #b5b5b5;background:#ececec;border-radius:1px"><svg style="position:absolute;left:1px;top:1px" width="8" height="8"><path d="M1 1L7 7M7 1L1 7" stroke="#555" stroke-width="1.1"/></svg></div><div style="position:absolute;left:38px;top:104px;width:1841px;height:1px;background:#2a2a2a"></div><div style="position:absolute;left:38px;top:105px;width:1826px;height:15px;background:#fff"></div><div style="position:absolute;left:38px;top:120px;width:1826px;height:1px;background:#111"></div><svg style="position:absolute;left:54px;top:105px;" width="1810" height="15" viewBox="0 0 1810 15"><path d="M1.5 13V15M5.5 13V15M9.5 13V15M13.5 13V15M18.5 0V15M22.5 13V15M26.5 13V15M30.5 13V15M35.5 13V15M39.5 9V15M43.5 13V15M47.5 13V15M52.5 13V15M56.5 13V15M60.5 0V15M64.5 13V15M69.5 13V15M73.5 13V15M77.5 13V15M81.5 9V15M86.5 13V15M90.5 13V15M94.5 13V15M98.5 13V15M103.5 0V15M107.5 13V15M111.5 13V15M115.5 13V15M120.5 13V15M124.5 9V15M128.5 13V15M132.5 13V15M137.5 13V15M141.5 13V15M145.5 0V15M149.5 13V15M154.5 13V15M158.5 13V15M162.5 13V15M166.5 9V15M171.5 13V15M175.5 13V15M179.5 13V15M183.5 13V15M188.5 0V15M192.5 13V15M196.5 13V15M200.5 13V15M205.5 13V15M209.5 9V15M213.5 13V15M217.5 13V15M222.5 13V15M226.5 13V15M230.5 0V15M234.5 13V15M239.5 13V15M243.5 13V15M247.5 13V15M251.5 9V15M256.5 13V15M260.5 13V15M264.5 13V15M268.5 13V15M273.5 0V15M277.5 13V15M281.5 13V15M285.5 13V15M290.5 13V15M294.5 9V15M298.5 13V15M302.5 13V15M307.5 13V15M311.5 13V15M315.5 0V15M319.5 13V15M324.5 13V15M328.5 13V15M332.5 13V15M336.5 9V15M341.5 13V15M345.5 13V15M349.5 13V15M353.5 13V15M358.5 0V15M362.5 13V15M366.5 13V15M370.5 13V15M375.5 13V15M379.5 9V15M383.5 13V15M387.5 13V15M392.5 13V15M396.5 13V15M400.5 0V15M404.5 13V15M409.5 13V15M413.5 13V15M417.5 13V15M421.5 9V15M426.5 13V15M430.5 13V15M434.5 13V15M438.5 13V15M443.5 0V15M447.5 13V15M451.5 13V15M455.5 13V15M460.5 13V15M464.5 9V15M468.5 13V15M473.5 13V15M477.5 13V15M481.5 13V15M485.5 0V15M490.5 13V15M494.5 13V15M498.5 13V15M502.5 13V15M507.5 9V15M511.5 13V15M515.5 13V15M519.5 13V15M524.5 13V15M528.5 0V15M532.5 13V15M536.5 13V15M541.5 13V15M545.5 13V15M549.5 9V15M553.5 13V15M558.5 13V15M562.5 13V15M566.5 13V15M570.5 0V15M575.5 13V15M579.5 13V15M583.5 13V15M587.5 13V15M592.5 9V15M596.5 13V15M600.5 13V15M604.5 13V15M609.5 13V15M613.5 0V15M617.5 13V15M621.5 13V15M626.5 13V15M630.5 13V15M634.5 9V15M638.5 13V15M643.5 13V15M647.5 13V15M651.5 13V15M655.5 0V15M660.5 13V15M664.5 13V15M668.5 13V15M672.5 13V15M677.5 9V15M681.5 13V15M685.5 13V15M689.5 13V15M694.5 13V15M698.5 0V15M702.5 13V15M706.5 13V15M711.5 13V15M715.5 13V15M719.5 9V15M723.5 13V15M728.5 13V15M732.5 13V15M736.5 13V15M740.5 0V15M745.5 13V15M749.5 13V15M753.5 13V15M757.5 13V15M762.5 9V15M766.5 13V15M770.5 13V15M774.5 13V15M779.5 13V15M783.5 0V15M787.5 13V15M791.5 13V15M796.5 13V15M800.5 13V15M804.5 9V15M808.5 13V15M813.5 13V15M817.5 13V15M821.5 13V15M825.5 0V15M830.5 13V15M834.5 13V15M838.5 13V15M842.5 13V15M847.5 9V15M851.5 13V15M855.5 13V15M859.5 13V15M864.5 13V15M868.5 0V15M872.5 13V15M876.5 13V15M881.5 13V15M885.5 13V15M889.5 9V15M893.5 13V15M898.5 13V15M902.5 13V15M906.5 13V15M910.5 0V15M915.5 13V15M919.5 13V15M923.5 13V15M927.5 13V15M932.5 9V15M936.5 13V15M940.5 13V15M944.5 13V15M949.5 13V15M953.5 0V15M957.5 13V15M961.5 13V15M966.5 13V15M970.5 13V15M974.5 9V15M978.5 13V15M983.5 13V15M987.5 13V15M991.5 13V15M996.5 0V15M1000.5 13V15M1004.5 13V15M1008.5 13V15M1013.5 13V15M1017.5 9V15M1021.5 13V15M1025.5 13V15M1030.5 13V15M1034.5 13V15M1038.5 0V15M1042.5 13V15M1047.5 13V15M1051.5 13V15M1055.5 13V15M1059.5 9V15M1064.5 13V15M1068.5 13V15M1072.5 13V15M1076.5 13V15M1081.5 0V15M1085.5 13V15M1089.5 13V15M1093.5 13V15M1098.5 13V15M1102.5 9V15M1106.5 13V15M1110.5 13V15M1115.5 13V15M1119.5 13V15M1123.5 0V15M1127.5 13V15M1132.5 13V15M1136.5 13V15M1140.5 13V15M1144.5 9V15M1149.5 13V15M1153.5 13V15M1157.5 13V15M1161.5 13V15M1166.5 0V15M1170.5 13V15M1174.5 13V15M1178.5 13V15M1183.5 13V15M1187.5 9V15M1191.5 13V15M1195.5 13V15M1200.5 13V15M1204.5 13V15M1208.5 0V15M1212.5 13V15M1217.5 13V15M1221.5 13V15M1225.5 13V15M1229.5 9V15M1234.5 13V15M1238.5 13V15M1242.5 13V15M1246.5 13V15M1251.5 0V15M1255.5 13V15M1259.5 13V15M1263.5 13V15M1268.5 13V15M1272.5 9V15M1276.5 13V15M1280.5 13V15M1285.5 13V15M1289.5 13V15M1293.5 0V15M1297.5 13V15M1302.5 13V15M1306.5 13V15M1310.5 13V15M1314.5 9V15M1319.5 13V15M1323.5 13V15M1327.5 13V15M1331.5 13V15M1336.5 0V15M1340.5 13V15M1344.5 13V15M1348.5 13V15M1353.5 13V15M1357.5 9V15M1361.5 13V15M1365.5 13V15M1370.5 13V15M1374.5 13V15M1378.5 0V15M1382.5 13V15M1387.5 13V15M1391.5 13V15M1395.5 13V15M1399.5 9V15M1404.5 13V15M1408.5 13V15M1412.5 13V15M1416.5 13V15M1421.5 0V15M1425.5 13V15M1429.5 13V15M1433.5 13V15M1438.5 13V15M1442.5 9V15M1446.5 13V15M1450.5 13V15M1455.5 13V15M1459.5 13V15M1463.5 0V15M1467.5 13V15M1472.5 13V15M1476.5 13V15M1480.5 13V15M1484.5 9V15M1489.5 13V15M1493.5 13V15M1497.5 13V15M1501.5 13V15M1506.5 0V15M1510.5 13V15M1514.5 13V15M1518.5 13V15M1523.5 13V15M1527.5 9V15M1531.5 13V15M1536.5 13V15M1540.5 13V15M1544.5 13V15M1548.5 0V15M1553.5 13V15M1557.5 13V15M1561.5 13V15M1565.5 13V15M1570.5 9V15M1574.5 13V15M1578.5 13V15M1582.5 13V15M1587.5 13V15M1591.5 0V15M1595.5 13V15M1599.5 13V15M1604.5 13V15M1608.5 13V15M1612.5 9V15M1616.5 13V15M1621.5 13V15M1625.5 13V15M1629.5 13V15M1633.5 0V15M1638.5 13V15M1642.5 13V15M1646.5 13V15M1650.5 13V15M1655.5 9V15M1659.5 13V15M1663.5 13V15M1667.5 13V15M1672.5 13V15M1676.5 0V15M1680.5 13V15M1684.5 13V15M1689.5 13V15M1693.5 13V15M1697.5 9V15M1701.5 13V15M1706.5 13V15M1710.5 13V15M1714.5 13V15M1718.5 0V15M1723.5 13V15M1727.5 13V15M1731.5 13V15M1735.5 13V15M1740.5 9V15M1744.5 13V15M1748.5 13V15M1752.5 13V15M1757.5 13V15M1761.5 0V15M1765.5 13V15M1769.5 13V15M1774.5 13V15M1778.5 13V15M1782.5 9V15M1786.5 13V15M1791.5 13V15M1795.5 13V15M1799.5 13V15M1803.5 0V15M1808.5 13V15" stroke="#111" stroke-width="1"/></svg><div style="position:absolute;left:54px;top:105px;width:1810px;height:15px;overflow:hidden"><div style="position:absolute;left:20px;top:1.30px;font-size:9.8px;line-height:9.8px;white-space:nowrap;color:#111;letter-spacing:-0.5px">60</div><div style="position:absolute;left:62px;top:1.30px;font-size:9.8px;line-height:9.8px;white-space:nowrap;color:#111;letter-spacing:-0.5px">40</div><div style="position:absolute;left:105px;top:1.30px;font-size:9.8px;line-height:9.8px;white-space:nowrap;color:#111;letter-spacing:-0.5px">20</div><div style="position:absolute;left:147px;top:1.30px;font-size:9.8px;line-height:9.8px;white-space:nowrap;color:#111;letter-spacing:-0.5px">0</div><div style="position:absolute;left:190px;top:1.30px;font-size:9.8px;line-height:9.8px;white-space:nowrap;color:#111;letter-spacing:-0.5px">20</div><div style="position:absolute;left:232px;top:1.30px;font-size:9.8px;line-height:9.8px;white-space:nowrap;color:#111;letter-spacing:-0.5px">40</div><div style="position:absolute;left:275px;top:1.30px;font-size:9.8px;line-height:9.8px;white-space:nowrap;color:#111;letter-spacing:-0.5px">60</div><div style="position:absolute;left:317px;top:1.30px;font-size:9.8px;line-height:9.8px;white-space:nowrap;color:#111;letter-spacing:-0.5px">80</div><div style="position:absolute;left:360px;top:1.30px;font-size:9.8px;line-height:9.8px;white-space:nowrap;color:#111;letter-spacing:-0.5px">100</div><div style="position:absolute;left:402px;top:1.30px;font-size:9.8px;line-height:9.8px;white-space:nowrap;color:#111;letter-spacing:-0.5px">120</div><div style="position:absolute;left:445px;top:1.30px;font-size:9.8px;line-height:9.8px;white-space:nowrap;color:#111;letter-spacing:-0.5px">140</div><div style="position:absolute;left:487px;top:1.30px;font-size:9.8px;line-height:9.8px;white-space:nowrap;color:#111;letter-spacing:-0.5px">160</div><div style="position:absolute;left:530px;top:1.30px;font-size:9.8px;line-height:9.8px;white-space:nowrap;color:#111;letter-spacing:-0.5px">180</div><div style="position:absolute;left:572px;top:1.30px;font-size:9.8px;line-height:9.8px;white-space:nowrap;color:#111;letter-spacing:-0.5px">200</div><div style="position:absolute;left:615px;top:1.30px;font-size:9.8px;line-height:9.8px;white-space:nowrap;color:#111;letter-spacing:-0.5px">220</div><div style="position:absolute;left:657px;top:1.30px;font-size:9.8px;line-height:9.8px;white-space:nowrap;color:#111;letter-spacing:-0.5px">240</div><div style="position:absolute;left:700px;top:1.30px;font-size:9.8px;line-height:9.8px;white-space:nowrap;color:#111;letter-spacing:-0.5px">260</div><div style="position:absolute;left:742px;top:1.30px;font-size:9.8px;line-height:9.8px;white-space:nowrap;color:#111;letter-spacing:-0.5px">280</div><div style="position:absolute;left:785px;top:1.30px;font-size:9.8px;line-height:9.8px;white-space:nowrap;color:#111;letter-spacing:-0.5px">300</div><div style="position:absolute;left:827px;top:1.30px;font-size:9.8px;line-height:9.8px;white-space:nowrap;color:#111;letter-spacing:-0.5px">320</div><div style="position:absolute;left:870px;top:1.30px;font-size:9.8px;line-height:9.8px;white-space:nowrap;color:#111;letter-spacing:-0.5px">340</div><div style="position:absolute;left:912px;top:1.30px;font-size:9.8px;line-height:9.8px;white-space:nowrap;color:#111;letter-spacing:-0.5px">360</div><div style="position:absolute;left:955px;top:1.30px;font-size:9.8px;line-height:9.8px;white-space:nowrap;color:#111;letter-spacing:-0.5px">380</div><div style="position:absolute;left:998px;top:1.30px;font-size:9.8px;line-height:9.8px;white-space:nowrap;color:#111;letter-spacing:-0.5px">400</div><div style="position:absolute;left:1040px;top:1.30px;font-size:9.8px;line-height:9.8px;white-space:nowrap;color:#111;letter-spacing:-0.5px">420</div><div style="position:absolute;left:1083px;top:1.30px;font-size:9.8px;line-height:9.8px;white-space:nowrap;color:#111;letter-spacing:-0.5px">440</div><div style="position:absolute;left:1125px;top:1.30px;font-size:9.8px;line-height:9.8px;white-space:nowrap;color:#111;letter-spacing:-0.5px">460</div><div style="position:absolute;left:1168px;top:1.30px;font-size:9.8px;line-height:9.8px;white-space:nowrap;color:#111;letter-spacing:-0.5px">480</div><div style="position:absolute;left:1210px;top:1.30px;font-size:9.8px;line-height:9.8px;white-space:nowrap;color:#111;letter-spacing:-0.5px">500</div><div style="position:absolute;left:1253px;top:1.30px;font-size:9.8px;line-height:9.8px;white-space:nowrap;color:#111;letter-spacing:-0.5px">520</div><div style="position:absolute;left:1295px;top:1.30px;font-size:9.8px;line-height:9.8px;white-space:nowrap;color:#111;letter-spacing:-0.5px">540</div><div style="position:absolute;left:1338px;top:1.30px;font-size:9.8px;line-height:9.8px;white-space:nowrap;color:#111;letter-spacing:-0.5px">560</div><div style="position:absolute;left:1380px;top:1.30px;font-size:9.8px;line-height:9.8px;white-space:nowrap;color:#111;letter-spacing:-0.5px">580</div><div style="position:absolute;left:1423px;top:1.30px;font-size:9.8px;line-height:9.8px;white-space:nowrap;color:#111;letter-spacing:-0.5px">600</div><div style="position:absolute;left:1465px;top:1.30px;font-size:9.8px;line-height:9.8px;white-space:nowrap;color:#111;letter-spacing:-0.5px">620</div><div style="position:absolute;left:1508px;top:1.30px;font-size:9.8px;line-height:9.8px;white-space:nowrap;color:#111;letter-spacing:-0.5px">640</div><div style="position:absolute;left:1550px;top:1.30px;font-size:9.8px;line-height:9.8px;white-space:nowrap;color:#111;letter-spacing:-0.5px">660</div><div style="position:absolute;left:1593px;top:1.30px;font-size:9.8px;line-height:9.8px;white-space:nowrap;color:#111;letter-spacing:-0.5px">680</div><div style="position:absolute;left:1635px;top:1.30px;font-size:9.8px;line-height:9.8px;white-space:nowrap;color:#111;letter-spacing:-0.5px">700</div><div style="position:absolute;left:1678px;top:1.30px;font-size:9.8px;line-height:9.8px;white-space:nowrap;color:#111;letter-spacing:-0.5px">720</div><div style="position:absolute;left:1720px;top:1.30px;font-size:9.8px;line-height:9.8px;white-space:nowrap;color:#111;letter-spacing:-0.5px">740</div><div style="position:absolute;left:1763px;top:1.30px;font-size:9.8px;line-height:9.8px;white-space:nowrap;color:#111;letter-spacing:-0.5px">760</div><div style="position:absolute;left:1805px;top:1.30px;font-size:9.8px;line-height:9.8px;white-space:nowrap;color:#111;letter-spacing:-0.5px">780</div></div><div style="position:absolute;left:38px;top:105px;width:15px;height:15px;background:#fff"></div><div style="position:absolute;left:53px;top:105px;width:1px;height:15px;background:#111"></div><svg style="position:absolute;left:39px;top:106px;" width="14" height="14" viewBox="0 0 14 14"><path d="M6.5 0V14M0 5.5H14" stroke="#111" stroke-dasharray="1 1"/><rect x="4.5" y="3.5" width="3" height="3" fill="#fff" stroke="#111" transform="rotate(45 6 5)"/></svg><div style="position:absolute;left:37px;top:105px;width:1px;height:916px;background:#222"></div><div style="position:absolute;left:38px;top:121px;width:15px;height:899px;background:#fff"></div><div style="position:absolute;left:53px;top:121px;width:1px;height:899px;background:#111"></div><div style="position:absolute;left:38px;top:121px;width:15px;height:404px;overflow:hidden"><div style="position:absolute;left:2px;top:-53.13px;font-size:9.6px;line-height:9.6px;white-space:nowrap;color:#111">4</div><div style="position:absolute;left:2px;top:-45.23px;font-size:9.6px;line-height:9.6px;white-space:nowrap;color:#111">0</div><div style="position:absolute;left:2px;top:-10.13px;font-size:9.6px;line-height:9.6px;white-space:nowrap;color:#111">2</div><div style="position:absolute;left:2px;top:-2.23px;font-size:9.6px;line-height:9.6px;white-space:nowrap;color:#111">0</div><div style="position:absolute;left:2px;top:31.87px;font-size:9.6px;line-height:9.6px;white-space:nowrap;color:#111">0</div><div style="position:absolute;left:2px;top:74.87px;font-size:9.6px;line-height:9.6px;white-space:nowrap;color:#111">2</div><div style="position:absolute;left:2px;top:82.77px;font-size:9.6px;line-height:9.6px;white-space:nowrap;color:#111">0</div><div style="position:absolute;left:2px;top:116.87px;font-size:9.6px;line-height:9.6px;white-space:nowrap;color:#111">4</div><div style="position:absolute;left:2px;top:124.77px;font-size:9.6px;line-height:9.6px;white-space:nowrap;color:#111">0</div><div style="position:absolute;left:2px;top:159.87px;font-size:9.6px;line-height:9.6px;white-space:nowrap;color:#111">6</div><div style="position:absolute;left:2px;top:167.77px;font-size:9.6px;line-height:9.6px;white-space:nowrap;color:#111">0</div><div style="position:absolute;left:2px;top:202.87px;font-size:9.6px;line-height:9.6px;white-space:nowrap;color:#111">8</div><div style="position:absolute;left:2px;top:210.77px;font-size:9.6px;line-height:9.6px;white-space:nowrap;color:#111">0</div><div style="position:absolute;left:2px;top:244.87px;font-size:9.6px;line-height:9.6px;white-space:nowrap;color:#111">1</div><div style="position:absolute;left:2px;top:252.77px;font-size:9.6px;line-height:9.6px;white-space:nowrap;color:#111">0</div><div style="position:absolute;left:2px;top:260.67px;font-size:9.6px;line-height:9.6px;white-space:nowrap;color:#111">0</div><div style="position:absolute;left:2px;top:287.87px;font-size:9.6px;line-height:9.6px;white-space:nowrap;color:#111">1</div><div style="position:absolute;left:2px;top:295.77px;font-size:9.6px;line-height:9.6px;white-space:nowrap;color:#111">2</div><div style="position:absolute;left:2px;top:303.67px;font-size:9.6px;line-height:9.6px;white-space:nowrap;color:#111">0</div><div style="position:absolute;left:2px;top:329.87px;font-size:9.6px;line-height:9.6px;white-space:nowrap;color:#111">1</div><div style="position:absolute;left:2px;top:337.77px;font-size:9.6px;line-height:9.6px;white-space:nowrap;color:#111">4</div><div style="position:absolute;left:2px;top:345.67px;font-size:9.6px;line-height:9.6px;white-space:nowrap;color:#111">0</div><div style="position:absolute;left:2px;top:372.87px;font-size:9.6px;line-height:9.6px;white-space:nowrap;color:#111">1</div><div style="position:absolute;left:2px;top:380.77px;font-size:9.6px;line-height:9.6px;white-space:nowrap;color:#111">6</div><div style="position:absolute;left:2px;top:388.67px;font-size:9.6px;line-height:9.6px;white-space:nowrap;color:#111">0</div></div><svg style="position:absolute;left:38px;top:121px;overflow:hidden" width="15" height="404" viewBox="0 0 15 404"><path d="M13 2.5H15M13 6.5H15M9 10.5H15M13 14.5H15M13 19.5H15M13 23.5H15M13 27.5H15M0 31.5H15M13 36.5H15M13 40.5H15M13 44.5H15M13 48.5H15M9 53.5H15M13 57.5H15M13 61.5H15M13 65.5H15M13 70.5H15M0 74.5H15M13 78.5H15M13 82.5H15M13 87.5H15M13 91.5H15M9 95.5H15M13 99.5H15M13 104.5H15M13 108.5H15M13 112.5H15M0 116.5H15M13 121.5H15M13 125.5H15M13 129.5H15M13 133.5H15M9 138.5H15M13 142.5H15M13 146.5H15M13 150.5H15M13 155.5H15M0 159.5H15M13 163.5H15M13 167.5H15M13 172.5H15M13 176.5H15M9 180.5H15M13 184.5H15M13 189.5H15M13 193.5H15M13 197.5H15M0 202.5H15M13 206.5H15M13 210.5H15M13 214.5H15M13 219.5H15M9 223.5H15M13 227.5H15M13 231.5H15M13 236.5H15M13 240.5H15M0 244.5H15M13 248.5H15M13 253.5H15M13 257.5H15M13 261.5H15M9 265.5H15M13 270.5H15M13 274.5H15M13 278.5H15M13 282.5H15M0 287.5H15M13 291.5H15M13 295.5H15M13 299.5H15M13 304.5H15M9 308.5H15M13 312.5H15M13 316.5H15M13 321.5H15M13 325.5H15M0 329.5H15M13 333.5H15M13 338.5H15M13 342.5H15M13 346.5H15M9 350.5H15M13 355.5H15M13 359.5H15M13 363.5H15M13 367.5H15M0 372.5H15M13 376.5H15M13 380.5H15M13 384.5H15M13 389.5H15M9 393.5H15M13 397.5H15M13 401.5H15" stroke="#111"/></svg><div style="position:absolute;left:38px;top:552px;width:15px;height:468px;overflow:hidden"><div style="position:absolute;left:2px;top:-26.13px;font-size:9.6px;line-height:9.6px;white-space:nowrap;color:#8a8a8a">4</div><div style="position:absolute;left:2px;top:-18.23px;font-size:9.6px;line-height:9.6px;white-space:nowrap;color:#8a8a8a">0</div><div style="position:absolute;left:2px;top:16.87px;font-size:9.6px;line-height:9.6px;white-space:nowrap;color:#8a8a8a">2</div><div style="position:absolute;left:2px;top:24.77px;font-size:9.6px;line-height:9.6px;white-space:nowrap;color:#8a8a8a">0</div><div style="position:absolute;left:2px;top:58.87px;font-size:9.6px;line-height:9.6px;white-space:nowrap;color:#8a8a8a">0</div><div style="position:absolute;left:2px;top:101.87px;font-size:9.6px;line-height:9.6px;white-space:nowrap;color:#8a8a8a">2</div><div style="position:absolute;left:2px;top:109.77px;font-size:9.6px;line-height:9.6px;white-space:nowrap;color:#8a8a8a">0</div><div style="position:absolute;left:2px;top:143.87px;font-size:9.6px;line-height:9.6px;white-space:nowrap;color:#8a8a8a">4</div><div style="position:absolute;left:2px;top:151.77px;font-size:9.6px;line-height:9.6px;white-space:nowrap;color:#8a8a8a">0</div><div style="position:absolute;left:2px;top:186.87px;font-size:9.6px;line-height:9.6px;white-space:nowrap;color:#8a8a8a">6</div><div style="position:absolute;left:2px;top:194.77px;font-size:9.6px;line-height:9.6px;white-space:nowrap;color:#8a8a8a">0</div><div style="position:absolute;left:2px;top:229.87px;font-size:9.6px;line-height:9.6px;white-space:nowrap;color:#8a8a8a">8</div><div style="position:absolute;left:2px;top:237.77px;font-size:9.6px;line-height:9.6px;white-space:nowrap;color:#8a8a8a">0</div><div style="position:absolute;left:2px;top:271.87px;font-size:9.6px;line-height:9.6px;white-space:nowrap;color:#8a8a8a">1</div><div style="position:absolute;left:2px;top:279.77px;font-size:9.6px;line-height:9.6px;white-space:nowrap;color:#8a8a8a">0</div><div style="position:absolute;left:2px;top:287.67px;font-size:9.6px;line-height:9.6px;white-space:nowrap;color:#8a8a8a">0</div><div style="position:absolute;left:2px;top:314.87px;font-size:9.6px;line-height:9.6px;white-space:nowrap;color:#8a8a8a">1</div><div style="position:absolute;left:2px;top:322.77px;font-size:9.6px;line-height:9.6px;white-space:nowrap;color:#8a8a8a">2</div><div style="position:absolute;left:2px;top:330.67px;font-size:9.6px;line-height:9.6px;white-space:nowrap;color:#8a8a8a">0</div><div style="position:absolute;left:2px;top:356.87px;font-size:9.6px;line-height:9.6px;white-space:nowrap;color:#8a8a8a">1</div><div style="position:absolute;left:2px;top:364.77px;font-size:9.6px;line-height:9.6px;white-space:nowrap;color:#8a8a8a">4</div><div style="position:absolute;left:2px;top:372.67px;font-size:9.6px;line-height:9.6px;white-space:nowrap;color:#8a8a8a">0</div><div style="position:absolute;left:2px;top:399.87px;font-size:9.6px;line-height:9.6px;white-space:nowrap;color:#8a8a8a">1</div><div style="position:absolute;left:2px;top:407.77px;font-size:9.6px;line-height:9.6px;white-space:nowrap;color:#8a8a8a">6</div><div style="position:absolute;left:2px;top:415.67px;font-size:9.6px;line-height:9.6px;white-space:nowrap;color:#8a8a8a">0</div><div style="position:absolute;left:2px;top:441.87px;font-size:9.6px;line-height:9.6px;white-space:nowrap;color:#8a8a8a">1</div><div style="position:absolute;left:2px;top:449.77px;font-size:9.6px;line-height:9.6px;white-space:nowrap;color:#8a8a8a">8</div><div style="position:absolute;left:2px;top:457.67px;font-size:9.6px;line-height:9.6px;white-space:nowrap;color:#8a8a8a">0</div></div><svg style="position:absolute;left:38px;top:552px;overflow:hidden" width="15" height="468" viewBox="0 0 15 468"><path d="M13 3.5H15M13 7.5H15M13 12.5H15M0 16.5H15M13 20.5H15M13 24.5H15M13 29.5H15M13 33.5H15M9 37.5H15M13 41.5H15M13 46.5H15M13 50.5H15M13 54.5H15M0 58.5H15M13 63.5H15M13 67.5H15M13 71.5H15M13 75.5H15M9 80.5H15M13 84.5H15M13 88.5H15M13 92.5H15M13 97.5H15M0 101.5H15M13 105.5H15M13 109.5H15M13 114.5H15M13 118.5H15M9 122.5H15M13 126.5H15M13 131.5H15M13 135.5H15M13 139.5H15M0 143.5H15M13 148.5H15M13 152.5H15M13 156.5H15M13 160.5H15M9 165.5H15M13 169.5H15M13 173.5H15M13 177.5H15M13 182.5H15M0 186.5H15M13 190.5H15M13 194.5H15M13 199.5H15M13 203.5H15M9 207.5H15M13 211.5H15M13 216.5H15M13 220.5H15M13 224.5H15M0 229.5H15M13 233.5H15M13 237.5H15M13 241.5H15M13 246.5H15M9 250.5H15M13 254.5H15M13 258.5H15M13 263.5H15M13 267.5H15M0 271.5H15M13 275.5H15M13 280.5H15M13 284.5H15M13 288.5H15M9 292.5H15M13 297.5H15M13 301.5H15M13 305.5H15M13 309.5H15M0 314.5H15M13 318.5H15M13 322.5H15M13 326.5H15M13 331.5H15M9 335.5H15M13 339.5H15M13 343.5H15M13 348.5H15M13 352.5H15M0 356.5H15M13 360.5H15M13 365.5H15M13 369.5H15M13 373.5H15M9 377.5H15M13 382.5H15M13 386.5H15M13 390.5H15M13 394.5H15M0 399.5H15M13 403.5H15M13 407.5H15M13 411.5H15M13 416.5H15M9 420.5H15M13 424.5H15M13 428.5H15M13 433.5H15M13 437.5H15M0 441.5H15M13 445.5H15M13 450.5H15M13 454.5H15M13 458.5H15M9 462.5H15M13 467.5H15" stroke="#111"/></svg><div style="position:absolute;left:38px;top:525px;width:15px;height:1px;background:#111"></div><div style="position:absolute;left:38px;top:526px;width:15px;height:26px;background:#ececec"></div><div style="position:absolute;left:38px;top:552px;width:15px;height:1px;background:#222"></div><div style="position:absolute;left:54px;top:121px;width:1810px;height:899px;background:#bbbbbb"></div><div style="position:absolute;left:199px;top:152px;width:1332px;height:316px;background:#5a5a5a;border:1px solid #000"></div><div style="position:absolute;left:210px;top:171px;width:203px;height:278px;background:#ca7b1f;border:2px solid #f6f8a0"></div><div style="position:absolute;left:433px;top:172px;width:203px;height:276px;background:#ca7b1f;border:2px solid #fff8ee"></div><div style="position:absolute;left:654px;top:172px;width:203px;height:276px;background:#ca7b1f;border:2px solid #fff8ee"></div><div style="position:absolute;left:873px;top:172px;width:202px;height:276px;background:#ca7b1f;border:2px solid #fff8ee"></div><div style="position:absolute;left:1095px;top:172px;width:202px;height:276px;background:#ca7b1f;border:2px solid #fff8ee"></div><div style="position:absolute;left:199px;top:610px;width:1332px;height:316px;background:#5a5a5a;border:1px solid #000"></div><div style="position:absolute;left:210px;top:630px;width:203px;height:276px;background:#ca7b1f;border:2px solid #fff8ee"></div><div style="position:absolute;left:433px;top:630px;width:203px;height:276px;background:#ca7b1f;border:2px solid #fff8ee"></div><div style="position:absolute;left:654px;top:630px;width:203px;height:276px;background:#ca7b1f;border:2px solid #fff8ee"></div><div style="position:absolute;left:873px;top:630px;width:202px;height:276px;background:#ca7b1f;border:2px solid #fff8ee"></div><div style="position:absolute;left:1095px;top:630px;width:202px;height:276px;background:#ca7b1f;border:2px solid #fff8ee"></div><div style="position:absolute;left:1318px;top:630px;width:202px;height:276px;background:#ca7b1f;border:2px solid #fff8ee"></div><div style="position:absolute;left:1316px;top:182px;width:160px;height:96px;background:#c81a2b"></div><div style="position:absolute;left:1372px;top:278px;width:150px;height:64px;background:#cd5726"></div><div style="position:absolute;left:1336px;top:342px;width:117px;height:96px;background:#cf7e22"></div><div style="position:absolute;left:1319.5px;top:207.22px;font-size:21px;line-height:21px;white-space:nowrap;color:#fff4ee;font-family:Liberation Sans;-webkit-text-stroke:0.45px #fff4ee;letter-spacing:1px">22. M</div><div style="position:absolute;left:1383.5px;top:207.22px;font-size:21px;line-height:21px;white-space:nowrap;color:#fff4ee;font-family:Liberation Sans;-webkit-text-stroke:0.45px #fff4ee;transform:scaleX(0.905);transform-origin:0 0">NDENER</div><div style="position:absolute;left:1319.5px;top:234.22px;font-size:21px;line-height:21px;white-space:nowrap;color:#fff4ee;font-family:Liberation Sans;-webkit-text-stroke:0.45px #fff4ee;transform:scaleX(0.905);transform-origin:0 0">JAZZ-MEET</div><div style="position:absolute;left:1434.5px;top:234.22px;font-size:21px;line-height:21px;white-space:nowrap;color:#fff4ee;font-family:Liberation Sans;-webkit-text-stroke:0.45px #fff4ee;letter-spacing:1.5px">NG</div><div style="position:absolute;left:1376px;top:301.76px;font-size:16px;line-height:16px;white-space:nowrap;color:#fff4ee;font-family:Liberation Sans;-webkit-text-stroke:0.45px #fff4ee;letter-spacing:0.6px">02. -11. MA</div><div style="position:absolute;left:1473px;top:301.76px;font-size:16px;line-height:16px;white-space:nowrap;color:#fff4ee;font-family:Liberation Sans;-webkit-text-stroke:0.45px #fff4ee;letter-spacing:1.1px">2014</div><div style="position:absolute;left:1339px;top:363.61px;font-size:17px;line-height:17px;white-space:nowrap;color:#fff4ee;font-family:Liberation Sans;-webkit-text-stroke:0.45px #fff4ee;letter-spacing:-0.45px">STADTHALLE</div><div style="position:absolute;left:1339px;top:390.61px;font-size:17px;line-height:17px;white-space:nowrap;color:#fff4ee;font-family:Liberation Sans;-webkit-text-stroke:0.45px #fff4ee">M</div><div style="position:absolute;left:1361px;top:390.61px;font-size:17px;line-height:17px;white-space:nowrap;color:#fff4ee;font-family:Liberation Sans;-webkit-text-stroke:0.45px #fff4ee">NDEN</div><svg style="position:absolute;left:1300px;top:195px;" width="240" height="250" viewBox="0 0 240 250"><circle cx="80.8" cy="11.2" r="3.6" fill="#fde8e4"/><path d="M81 12V29M131 41V57M167 108V121M57 197V211" stroke="#fff0ea" stroke-width="2.4"/><path d="M81 11 V29.5 C81.5 34 86 36.5 94 36 C102 35.5 110 32 116 32 C124 32 131 37 131 45 V58 C131 64 138 68.5 148 68.5 H175" fill="none" stroke="#fbd8ce" stroke-width="2"/><path d="M188 82 C188 90 180 93 172 96 C167 98 167 103 167 110 V126 C167 132 162 136 155 135 C145 134 132 130 127 130 C121 131 119.5 138 119.5 147 C119.5 157 130 167 130.5 175 V184 C130.5 191 120 193 110 192.5 C95 192 75 187 65 187.5 C58 188 56.5 193 57 200 C57.5 208 62 215 60 223 C58 230 53 233 54 237 C55 240 57 242 57 242" fill="none" stroke="#fbd8ce" stroke-width="2"/></svg><div style="position:absolute;left:210px;top:171px;width:203px;height:278px;border:2px solid #f6f8a0;box-shadow:0 0 0 1px #5a8010"></div><div style="position:absolute;left:207px;top:168px;width:6px;height:6px;background:#fbffe8;border:1px solid #5a8a00"></div><div style="position:absolute;left:308px;top:168px;width:6px;height:6px;background:#fbffe8;border:1px solid #5a8a00"></div><div style="position:absolute;left:409px;top:168px;width:6px;height:6px;background:#fbffe8;border:1px solid #5a8a00"></div><div style="position:absolute;left:207px;top:307px;width:6px;height:6px;background:#fbffe8;border:1px solid #5a8a00"></div><div style="position:absolute;left:409px;top:307px;width:6px;height:6px;background:#fbffe8;border:1px solid #5a8a00"></div><div style="position:absolute;left:207px;top:445px;width:6px;height:6px;background:#fbffe8;border:1px solid #5a8a00"></div><div style="position:absolute;left:308px;top:445px;width:6px;height:6px;background:#fbffe8;border:1px solid #5a8a00"></div><div style="position:absolute;left:409px;top:445px;width:6px;height:6px;background:#fbffe8;border:1px solid #5a8a00"></div><div style="position:absolute;left:368px;top:169px;width:7px;height:7px;background:#1b3e8a;border:1px solid #3b6a20"></div><div style="position:absolute;left:408px;top:184px;width:8px;height:9px;background:#f4f000;border:1px solid #b0b000"></div><div style="position:absolute;left:1864px;top:105px;width:15px;height:915px;background:#f0f0f0;border-left:1px solid #fafafa"></div><svg style="position:absolute;left:1869px;top:112px;" width="8" height="5" viewBox="0 0 8 5"><path d="M0 5H8L4 0Z" fill="#222"/></svg><div style="position:absolute;left:1865px;top:179px;width:14px;height:824px;border:1px solid #c4c4c4;border-radius:2px;background:linear-gradient(90deg,#fdfdfd,#eeeeee 45%,#d5d5d5)"></div><svg style="position:absolute;left:1868px;top:586px;" width="8" height="9" viewBox="0 0 8 9"><path d="M0 1.5H7M0 4.5H7M0 7.5H7" stroke="#444"/></svg><svg style="position:absolute;left:1869px;top:1010px;" width="8" height="5" viewBox="0 0 8 5"><path d="M0 0H8L4.0 5Z" fill="#222"/></svg><div style="position:absolute;left:38px;top:1020px;width:1841px;height:15px;background:#efefef"></div><div style="position:absolute;left:38px;top:1035px;width:1878px;height:1px;background:#444"></div><div style="position:absolute;left:4px;top:1036px;width:1912px;height:3px;background:#fdfdfd"></div><div style="position:absolute;left:1916px;top:1px;width:3px;height:1038px;background:#fdfdfd"></div><svg style="position:absolute;left:40px;top:1024px;" width="8" height="8" viewBox="0 0 8 8"><path d="M0.5 0V8" stroke="#111"/><path d="M7 0V8L2 4Z" fill="#111"/></svg><svg style="position:absolute;left:57px;top:1024px;" width="6" height="8" viewBox="0 0 6 8"><path d="M5 0V8L0 4Z" fill="#222"/></svg><div style="position:absolute;left:68px;top:1021px;width:97px;height:14px;background:#fff"></div><div style="position:absolute;left:70px;top:1023.03px;font-size:10px;line-height:10px;white-space:nowrap;color:#111">2</div><svg style="position:absolute;left:154px;top:1028px;" width="8" height="5" viewBox="0 0 8 5"><path d="M0 0H8L4.0 5Z" fill="#111"/></svg><svg style="position:absolute;left:172px;top:1024px;" width="6" height="8" viewBox="0 0 6 8"><path d="M0 0V8L5 4Z" fill="#999"/></svg><svg style="position:absolute;left:184px;top:1024px;" width="8" height="8" viewBox="0 0 8 8"><path d="M0 0V8L5 4Z" fill="#999"/><path d="M6.5 0V8" stroke="#999"/></svg><svg style="position:absolute;left:200px;top:1022px;" width="12" height="12" viewBox="0 0 12 12"><defs><radialGradient id="gg" cx="0.4" cy="0.35" r="0.7"><stop offset="0" stop-color="#7ef05a"/><stop offset="1" stop-color="#1d9a10"/></radialGradient></defs><circle cx="6" cy="6" r="5.5" fill="url(#gg)"/></svg><div style="position:absolute;left:215px;top:1023.71px;font-size:9.2px;line-height:9.2px;white-space:nowrap;color:#0e0e1e;-webkit-text-stroke:0.15px #0e0e1e">Ohne Fehler</div><svg style="position:absolute;left:286px;top:1026px;" width="6" height="4" viewBox="0 0 6 4"><path d="M0 0H6L3.0 4Z" fill="#333"/></svg><svg style="position:absolute;left:302px;top:1022px;" width="15" height="13" viewBox="0 0 15 13"><circle cx="6.5" cy="6.5" r="5.5" fill="#f4f4f4" stroke="#777" stroke-width="1.3"/><path d="M4 3V9H10" fill="none" stroke="#333" stroke-width="1.2"/><path d="M12 10H15L13.5 12Z" fill="#222"/></svg><div style="position:absolute;left:322px;top:1020px;width:1px;height:15px;background:#e0e0e0"></div><svg style="position:absolute;left:328px;top:1024px;" width="5" height="8" viewBox="0 0 5 8"><path d="M4 0V8L0 4Z" fill="#333"/></svg><div style="position:absolute;left:788px;top:1021px;width:681px;height:14px;border:1px solid #aaa;border-radius:2px;background:linear-gradient(#fafafa,#ececec 50%,#d8d8d8)"></div><svg style="position:absolute;left:1124px;top:1024px;" width="8" height="8" viewBox="0 0 8 8"><path d="M1.5 0V7M4.5 0V7M7.5 0V7" stroke="#333"/></svg><svg style="position:absolute;left:1855px;top:1024px;" width="5" height="8" viewBox="0 0 5 8"><path d="M0 0V8L4 4Z" fill="#222"/></svg><svg style="position:absolute;left:1866px;top:1022px;" width="12" height="12" viewBox="0 0 12 12"><g fill="#777"><rect x="9" y="1" width="1" height="1"/><rect x="6" y="4" width="1" height="1"/><rect x="9" y="4" width="1" height="1"/><rect x="3" y="7" width="1" height="1"/><rect x="6" y="7" width="1" height="1"/><rect x="9" y="7" width="1" height="1"/><rect x="0" y="10" width="1" height="1"/><rect x="3" y="10" width="1" height="1"/><rect x="6" y="10" width="1" height="1"/><rect x="9" y="10" width="1" height="1"/></g></svg><div style="position:absolute;left:4px;top:85px;width:34px;height:12px;background:linear-gradient(#3a3a3a,#606060);border:1px solid #2c2c2c"></div><svg style="position:absolute;left:9px;top:88px;" width="10" height="6" viewBox="0 0 10 6"><path d="M0 0V6L4 3Z M5 0V6L9 3Z" fill="#ddd"/></svg><div style="position:absolute;left:4px;top:97px;width:34px;height:529px;background:#eeeeee;border:1px solid #3a3a3a;border-top:none"></div><svg style="position:absolute;left:10px;top:100px;" width="23" height="4" viewBox="0 0 23 4"><path d="M0 0.5H23M0 2.5H23" stroke="#a8a8a8" stroke-dasharray="1 1.2"/></svg><div style="position:absolute;left:9px;top:117px;width:24px;height:17px;border:1px solid #6a6a6a;border-radius:3px;background:linear-gradient(#e4e4e4,#cfcfcf)"></div><svg style="position:absolute;left:16px;top:118px;" width="10" height="15" viewBox="0 0 10 15"><path d="M1 0.5V12L4 9.2L6.3 14L8.2 13.1L6 8.4H10Z" fill="#111"/></svg><svg style="position:absolute;left:14px;top:140px;" width="11" height="14" viewBox="0 0 11 14"><path d="M1.5 0.8V10.5L4 8.3L6 12.6L7.7 11.8L5.8 7.6H9.5Z" fill="#fff" stroke="#111" stroke-width="1.1" stroke-linejoin="round"/></svg><svg style="position:absolute;left:13px;top:158px;" width="17" height="17" viewBox="0 0 17 17"><path d="M1.5 1.5H8L11 4.5V13.5H1.5Z" fill="#f6f6f6" stroke="#444"/><path d="M8 1.5V4.5H11" fill="none" stroke="#444"/><path d="M8.5 7.5V15L10.5 13.3L12 16.2L13.3 15.5L12 12.8H14.8Z" fill="#111"/></svg><svg style="position:absolute;left:10px;top:179px;" width="22" height="16" viewBox="0 0 22 16"><path d="M1.5 1V15M20.5 1V15" stroke="#111" stroke-width="1.5"/><path d="M4 8H18" stroke="#222" stroke-width="1.2"/><path d="M4 8L7.5 5V11Z M18 8L14.5 5V11Z" fill="#222"/></svg><div style="position:absolute;left:8px;top:201px;width:26px;height:1px;background:#c4c4c4;box-shadow:0 1px 0 #fff"></div><div style="position:absolute;left:14.3px;top:205.15px;font-size:20.5px;line-height:20.5px;white-space:nowrap;font-family:Liberation Serif;color:#111;-webkit-text-stroke:0.3px #111">T</div><svg style="position:absolute;left:27px;top:219px;" width="4" height="4" viewBox="0 0 4 4"><path d="M4 0V4H0Z" fill="#111"/></svg><svg style="position:absolute;left:12px;top:228px;" width="17" height="17" viewBox="0 0 17 17"><path d="M1 1L15 15" stroke="#111" stroke-width="1.3"/></svg><svg style="position:absolute;left:13px;top:247px;" width="19" height="20" viewBox="0 0 19 20"><path d="M7.5 1.5L3.5 9.5L5.5 13.5H9.5L11.5 9.5Z" fill="#fafafa" stroke="#111" stroke-width="1.2"/><path d="M7.5 5V10" stroke="#111"/><circle cx="7.5" cy="10.3" r="1" fill="#111"/><path d="M5 14.5H10V18H9V15.5H6V18H5Z" fill="#222"/><path d="M18 16V19H15Z" fill="#111"/></svg><svg style="position:absolute;left:12px;top:271px;" width="19" height="18" viewBox="0 0 19 18"><path d="M2 15.5L3.5 11.5L13 2L15.5 4.5L6 14Z" fill="#ececec" stroke="#111" stroke-width="1.1"/><path d="M11.5 3.5L14 6M3.5 11.5L6 14" stroke="#111"/><path d="M2 15.5L2.8 13.2L4.3 14.7Z" fill="#111"/><path d="M18 14V18H14Z" fill="#111"/></svg><svg style="position:absolute;left:13px;top:293px;" width="19" height="15" viewBox="0 0 19 15"><rect x="1.5" y="1.5" width="12" height="10" fill="#f4f4f4" stroke="#111" stroke-width="1.4"/><path d="M2 2L13 11M13 2L2 11" stroke="#111" stroke-width="1.1"/><path d="M14 12H16L14 14" fill="#444"/><path d="M18 10V14H14Z" fill="#111"/></svg><svg style="position:absolute;left:13px;top:314px;" width="19" height="15" viewBox="0 0 19 15"><defs><linearGradient id="rg" x1="0" y1="0" x2="1" y2="1"><stop offset="0" stroke-opacity="0" stop-color="#fff"/><stop offset="1" stop-color="#8a8a8a"/></linearGradient></defs><rect x="1.5" y="1.5" width="12" height="11" fill="url(#rg)" stroke="#222" stroke-width="1.2"/><path d="M18 10V14H14Z" fill="#111"/></svg><div style="position:absolute;left:8px;top:334px;width:26px;height:1px;background:#c4c4c4;box-shadow:0 1px 0 #fff"></div><svg style="position:absolute;left:12px;top:343px;" width="19" height="12" viewBox="0 0 19 12"><ellipse cx="3.5" cy="2.8" rx="2.3" ry="2" fill="none" stroke="#222" stroke-width="1.3"/><ellipse cx="3.5" cy="8.7" rx="2.3" ry="2" fill="none" stroke="#222" stroke-width="1.3"/><path d="M5.5 4L18 9.5M5.5 7.5L18 2" stroke="#333" stroke-width="1.3"/></svg><svg style="position:absolute;left:13px;top:363px;" width="19" height="17" viewBox="0 0 19 17"><rect x="4.5" y="1.5" width="11" height="10" fill="none" stroke="#111" stroke-dasharray="1.5 1.5"/><path d="M0.5 1V11L8 6Z" fill="#333"/><path d="M13 11L17 15M14.5 15H17V12.5" stroke="#111" fill="none" stroke-width="1.2"/></svg><svg style="position:absolute;left:13px;top:385px;" width="17" height="13" viewBox="0 0 17 13"><defs><linearGradient id="g1"><stop offset="0" stop-color="#fff"/><stop offset="0.3" stop-color="#eee"/><stop offset="1" stop-color="#111"/></linearGradient></defs><rect x="0.5" y="0.5" width="15" height="11" fill="url(#g1)" stroke="#222"/></svg><svg style="position:absolute;left:13px;top:406px;" width="17" height="13" viewBox="0 0 17 13"><defs><linearGradient id="g2" x1="0" y1="0" x2="0" y2="1"><stop offset="0" stop-color="#f4f4f4"/><stop offset="0.45" stop-color="#ddd"/><stop offset="1" stop-color="#333"/></linearGradient></defs><rect x="0.5" y="0.5" width="15" height="11" fill="url(#g2)" stroke="#333"/><path d="M2 3h2M6 3h2M10 3h2M4 5h2M8 5h2M12 5h2M2 7h2M6 7h2M10 7h2" stroke="#bbb" stroke-width="2"/></svg><div style="position:absolute;left:8px;top:426px;width:26px;height:1px;background:#c4c4c4;box-shadow:0 1px 0 #fff"></div><svg style="position:absolute;left:12px;top:431px;" width="17" height="17" viewBox="0 0 17 17"><path d="M1.5 1.5H14.5V11L10.5 15.5H1.5Z" fill="#fbfbfb" stroke="#333"/><path d="M10.5 15.5V11H14.5" fill="#ddd" stroke="#333"/><path d="M4 5H12M4 7.5H12M4 10H10" stroke="#666"/></svg><svg style="position:absolute;left:11px;top:452px;" width="19" height="18" viewBox="0 0 19 18"><path d="M1.5 16.5L2 13.5L9 6.5L11.5 9L4.5 16Z" fill="#f4f4f4" stroke="#111"/><path d="M9 5L13 1.5Q15 0.5 16 2Q17.5 3 16.5 5L13 9Z" fill="#222"/><path d="M8 5L13 10" stroke="#111" stroke-width="1.5"/><path d="M18 14V18H14Z" fill="#111"/></svg><svg style="position:absolute;left:12px;top:475px;" width="17" height="17" viewBox="0 0 17 17"><path d="M4 16Q1 12 1 9Q1 7.5 2.5 8L4 10V3Q4 2 5 2Q6 2 6 3V8V1.8Q6 0.8 7 0.8Q8 0.8 8 1.8V8V2.3Q8 1.3 9 1.3Q10 1.3 10 2.3V8.5V4Q10 3 11 3Q12 3 12 4V11Q12 14 10 16Z" fill="#fafafa" stroke="#111" stroke-width="1.1"/></svg><svg style="position:absolute;left:12px;top:495px;" width="17" height="18" viewBox="0 0 17 18"><circle cx="6.5" cy="6.5" r="5" fill="#f4f4f4" stroke="#111" stroke-width="1.5"/><path d="M10 10L15.5 15.5" stroke="#111" stroke-width="2.6"/></svg><div style="position:absolute;left:8px;top:516px;width:26px;height:1px;background:#c4c4c4;box-shadow:0 1px 0 #fff"></div><svg style="position:absolute;left:9px;top:520px;" width="25" height="33" viewBox="0 0 25 33"><rect x="1.5" y="2.5" width="12" height="12" fill="#d68020" stroke="#555"/><rect x="10.5" y="10.5" width="11" height="11" fill="#fff" stroke="#444"/><rect x="12.5" y="12.5" width="7" height="7" fill="#eee" stroke="#444"/><path d="M19 4.5H20.5Q22.5 4.5 22.5 6.5V7.5" fill="none" stroke="#222" stroke-width="1.2"/><path d="M17 4.5L19.5 2.5V6.5Z M22.5 10L20.5 7.5H24.5Z" fill="#222"/><rect x="4.5" y="26.5" width="6" height="5" fill="#222"/><rect x="1.5" y="21.5" width="6" height="6" fill="#fff" stroke="#222"/><path d="M2.5 26.5L6.5 22.5" stroke="#e02060" stroke-width="1.2"/></svg><div style="position:absolute;left:8px;top:553px;width:26px;height:1px;background:#c4c4c4;box-shadow:0 1px 0 #fff"></div><svg style="position:absolute;left:10px;top:556px;" width="24" height="10" viewBox="0 0 24 10"><rect x="0.5" y="0.5" width="9" height="8" fill="#ddd" stroke="#333"/><rect x="2.5" y="2.5" width="5" height="4" fill="#666"/></svg><div style="position:absolute;left:22px;top:556.88px;font-size:9px;line-height:9px;white-space:nowrap;font-family:Liberation Serif;color:#888">T</div><div style="position:absolute;left:8px;top:568px;width:26px;height:1px;background:#c4c4c4;box-shadow:0 1px 0 #fff"></div><div style="position:absolute;left:10px;top:573px;width:23px;height:19px;border:1px solid #666;border-radius:3px;background:linear-gradient(#eaeaea,#cccccc)"><div style="position:absolute;left:5px;top:3px;width:11px;height:11px;background:#fff;border:1px solid #333"></div></div><div style="position:absolute;left:8px;top:596px;width:26px;height:1px;background:#c4c4c4;box-shadow:0 1px 0 #fff"></div><div style="position:absolute;left:9px;top:602px;width:24px;height:18px;border:1px solid #666;border-radius:4px;background:linear-gradient(#e0e0e0,#f4f4f4 50%,#d8d8d8)"><div style="position:absolute;left:5px;top:2px;width:11px;height:11px;background:linear-gradient(#fff,#fff 15%,#999);border:1px solid #111;border-top-width:2px"></div></div><div style="position:absolute;left:2px;top:110px;width:38px;height:30px;border:4px solid #ee0000;border-radius:2px"></div><div style="position:absolute;left:1879px;top:85px;width:37px;height:12px;background:linear-gradient(#3a3a3a,#606060);border:1px solid #2c2c2c"></div><svg style="position:absolute;left:1904px;top:88px;" width="10" height="6" viewBox="0 0 10 6"><path d="M4 0V6L0 3Z M9 0V6L5 3Z" fill="#ddd"/></svg><div style="position:absolute;left:1879px;top:97px;width:37px;height:712px;background:#eeeeee;border:1px solid #3a3a3a;border-top:none"></div><div style="position:absolute;left:1880px;top:200px;width:35px;height:1px;background:#444"></div><div style="position:absolute;left:1880px;top:305px;width:35px;height:1px;background:#444"></div><div style="position:absolute;left:1880px;top:409px;width:35px;height:1px;background:#444"></div><div style="position:absolute;left:1880px;top:543px;width:35px;height:1px;background:#444"></div><div style="position:absolute;left:1880px;top:617px;width:35px;height:1px;background:#444"></div><div style="position:absolute;left:1880px;top:660px;width:35px;height:1px;background:#444"></div><div style="position:absolute;left:1880px;top:764px;width:35px;height:1px;background:#444"></div><svg style="position:absolute;left:1884px;top:101px;" width="27" height="4" viewBox="0 0 27 4"><path d="M0 0.5H27M0 2.5H27" stroke="#a8a8a8" stroke-dasharray="1 1.2"/></svg><svg style="position:absolute;left:1884px;top:205px;" width="27" height="4" viewBox="0 0 27 4"><path d="M0 0.5H27M0 2.5H27" stroke="#a8a8a8" stroke-dasharray="1 1.2"/></svg><svg style="position:absolute;left:1884px;top:309px;" width="27" height="4" viewBox="0 0 27 4"><path d="M0 0.5H27M0 2.5H27" stroke="#a8a8a8" stroke-dasharray="1 1.2"/></svg><svg style="position:absolute;left:1884px;top:413px;" width="27" height="4" viewBox="0 0 27 4"><path d="M0 0.5H27M0 2.5H27" stroke="#a8a8a8" stroke-dasharray="1 1.2"/></svg><svg style="position:absolute;left:1884px;top:548px;" width="27" height="4" viewBox="0 0 27 4"><path d="M0 0.5H27M0 2.5H27" stroke="#a8a8a8" stroke-dasharray="1 1.2"/></svg><svg style="position:absolute;left:1884px;top:621px;" width="27" height="4" viewBox="0 0 27 4"><path d="M0 0.5H27M0 2.5H27" stroke="#a8a8a8" stroke-dasharray="1 1.2"/></svg><svg style="position:absolute;left:1884px;top:665px;" width="27" height="4" viewBox="0 0 27 4"><path d="M0 0.5H27M0 2.5H27" stroke="#a8a8a8" stroke-dasharray="1 1.2"/></svg><svg style="position:absolute;left:1884px;top:769px;" width="27" height="4" viewBox="0 0 27 4"><path d="M0 0.5H27M0 2.5H27" stroke="#a8a8a8" stroke-dasharray="1 1.2"/></svg><svg style="position:absolute;left:1889px;top:113px;" width="19" height="19" viewBox="0 0 19 19"><path d="M9.5 8L18 12.5L9.5 17L1 12.5Z" fill="#333"/><path d="M9.5 4.5L18 9L9.5 13.5L1 9Z" fill="#999"/><path d="M9.5 1L18 5.5L9.5 10L1 5.5Z" fill="#fbfbfb" stroke="#444"/></svg><svg style="position:absolute;left:1889px;top:144px;" width="19" height="16" viewBox="0 0 19 16"><ellipse cx="5.5" cy="5" rx="4.6" ry="3" transform="rotate(35 5.5 5)" fill="#eee" stroke="#222" stroke-width="1.4"/><ellipse cx="13" cy="10.5" rx="4.6" ry="3" transform="rotate(-20 13 10.5)" fill="none" stroke="#222" stroke-width="1.4"/><path d="M7 8.5Q9 11 10 10" fill="none" stroke="#222" stroke-width="1.2"/></svg><svg style="position:absolute;left:1889px;top:173px;" width="18" height="19" viewBox="0 0 18 19"><defs><linearGradient id="pg" x1="0" y1="0" x2="0" y2="1"><stop offset="0" stop-color="#fff"/><stop offset="1" stop-color="#bbb"/></linearGradient></defs><path d="M1.5 6.5L5 3H8.5V15.5H1.5Z M16.5 6.5L13 3H9.5V15.5H16.5Z" fill="url(#pg)" stroke="#111" stroke-width="1.2"/><path d="M1.5 6.5H5V3M16.5 6.5H13V3" fill="#fff" stroke="#111"/><path d="M9 0V18" stroke="#111" stroke-width="1.2"/></svg><svg style="position:absolute;left:1889px;top:220px;" width="18" height="15" viewBox="0 0 18 15"><rect x="0" y="0" width="18" height="14" fill="#222"/><rect x="1" y="1" width="3.5" height="3.2" fill="#444"/><rect x="5" y="1" width="3.5" height="3.2" fill="#888"/><rect x="9" y="1" width="3.5" height="3.2" fill="#aaa"/><rect x="13" y="1" width="3.5" height="3.2" fill="#fff"/><rect x="1" y="5" width="3.5" height="3.2" fill="#777"/><rect x="5" y="5" width="3.5" height="3.2" fill="#aaa"/><rect x="9" y="5" width="3.5" height="3.2" fill="#555"/><rect x="13" y="5" width="3.5" height="3.2" fill="#fff"/><rect x="1" y="9" width="3.5" height="3.2" fill="#999"/><rect x="5" y="9" width="3.5" height="3.2" fill="#eee"/><rect x="9" y="9" width="3.5" height="3.2" fill="#fff"/><rect x="13" y="9" width="3.5" height="3.2" fill="#ccc"/></svg><svg style="position:absolute;left:1889px;top:248px;" width="19" height="17" viewBox="0 0 19 17"><path d="M10 1Q18 1 18 7Q18 11 14 10Q11 10 12 13Q12 16 8 16Q1 16 1 9Q1 1 10 1Z" fill="#555"/><circle cx="5" cy="8" r="1.6" fill="#fff"/><circle cx="8" cy="4.5" r="1.6" fill="#ddd"/><circle cx="12.5" cy="4" r="1.6" fill="#eee"/><circle cx="6" cy="12" r="1.6" fill="#ccc"/></svg><svg style="position:absolute;left:1889px;top:279px;" width="18" height="14" viewBox="0 0 18 14"><defs><linearGradient id="rg3"><stop offset="0" stop-color="#fff"/><stop offset="1" stop-color="#222"/></linearGradient></defs><rect x="1.5" y="1.5" width="15" height="11" fill="url(#rg3)" stroke="#222"/></svg><svg style="position:absolute;left:1889px;top:323px;" width="18" height="15" viewBox="0 0 18 15"><path d="M1 1.5H17" stroke="#444" stroke-dasharray="2 1"/><path d="M1 5.5H17" stroke="#333" stroke-width="1.5"/><path d="M1 9.5H17" stroke="#222" stroke-width="2"/><path d="M1 13H17" stroke="#111" stroke-width="3"/></svg><div style="position:absolute;left:1888px;top:352.11px;font-size:17px;line-height:17px;white-space:nowrap;font-family:Liberation Serif;font-style:italic;font-weight:bold;color:#222;letter-spacing:-0.5px">fx</div><svg style="position:absolute;left:1889px;top:381px;" width="19" height="18" viewBox="0 0 19 18"><rect x="5.5" y="1.5" width="12" height="11" fill="#fafafa" stroke="#222"/><path d="M9 3H15V10" fill="none" stroke="#999"/><rect x="1.5" y="9.5" width="7" height="7" fill="#fff" stroke="#222"/><rect x="8" y="8" width="6" height="5" fill="#bbb"/></svg><svg style="position:absolute;left:1891px;top:428px;" width="14" height="15" viewBox="0 0 14 15"><path d="M6 1H12V14M9 1V14" fill="none" stroke="#222" stroke-width="2"/><path d="M7 1Q1 1 1 4.5Q1 8 7 8Z" fill="#222"/></svg><svg style="position:absolute;left:1889px;top:455px;" width="19" height="19" viewBox="0 0 19 19"><rect x="3.5" y="10.5" width="6" height="6" fill="#fff" stroke="#222"/><rect x="1.5" y="8.5" width="6" height="6" fill="#fff" stroke="#222"/><path d="M11 1.5H17V17M14 1.5V16" fill="none" stroke="#222" stroke-width="1.8"/><path d="M12 1Q8 1 8 4.5Q8 8 12 8Z" fill="#222"/></svg><svg style="position:absolute;left:1889px;top:485px;" width="19" height="20" viewBox="0 0 19 20"><rect x="3.5" y="13.5" width="6" height="6" fill="#fff" stroke="#222"/><rect x="1.5" y="11.5" width="6" height="6" fill="#fff" stroke="#222"/><path d="M7 15L12 1.5H13L18 15M9 10H16" fill="none" stroke="#222" stroke-width="2.2"/></svg><div style="position:absolute;left:1886px;top:517.11px;font-size:17px;line-height:17px;white-space:nowrap;font-family:Liberation Serif;color:#222;letter-spacing:-1px;-webkit-text-stroke:0.3px #222"><i>Aa</i></div><svg style="position:absolute;left:1889px;top:560px;" width="18" height="16" viewBox="0 0 18 16"><path d="M1.5 0V16" stroke="#222" stroke-width="1.4"/><rect x="3" y="2" width="8" height="5" fill="#777"/><rect x="3" y="9" width="13" height="5" fill="#222"/></svg><svg style="position:absolute;left:1889px;top:589px;" width="18" height="18" viewBox="0 0 18 18"><rect x="1.5" y="1.5" width="9" height="9" fill="#888" stroke="#222"/><rect x="6" y="6" width="10" height="10" fill="#222"/><rect x="6" y="6" width="4.5" height="4.5" fill="#bbb"/></svg><svg style="position:absolute;left:1886px;top:634px;" width="22" height="18" viewBox="0 0 22 18"><path d="M9 2H15L18 5V13H9Z" fill="#fff" stroke="#222"/><path d="M1 6H7M5 3.5L8 6L5 8.5" fill="none" stroke="#222" stroke-width="1.8"/><circle cx="15" cy="13" r="3.5" fill="#222"/><circle cx="15" cy="13" r="1.2" fill="#fff"/></svg><svg style="position:absolute;left:1889px;top:678px;" width="18" height="16" viewBox="0 0 18 16"><rect x="1.5" y="1.5" width="15" height="13" fill="#fff" stroke="#222"/><rect x="2" y="2" width="14" height="3" fill="#333"/><path d="M2 7.5H16M2 10.5H16M5.5 5V14" stroke="#444"/></svg><svg style="position:absolute;left:1889px;top:707px;" width="18" height="19" viewBox="0 0 18 19"><rect x="5.5" y="1.5" width="11" height="11" fill="#fff" stroke="#222"/><rect x="6" y="2" width="10" height="3" fill="#333"/><path d="M6 7.5H16M6 10H16" stroke="#444"/><rect x="1.5" y="10.5" width="7" height="7" fill="#fff" stroke="#222"/></svg><svg style="position:absolute;left:1889px;top:737px;" width="18" height="18" viewBox="0 0 18 18"><rect x="5.5" y="1.5" width="11" height="11" fill="#fff" stroke="#222"/><rect x="11" y="2" width="5" height="10" fill="#333"/><rect x="1.5" y="9.5" width="7" height="7" fill="#fff" stroke="#222"/></svg><svg style="position:absolute;left:1889px;top:782px;" width="18" height="19" viewBox="0 0 18 19"><path d="M13 1Q5 0 4 4Q3 8 9 9Q14 10 13 13Q12 17 3 16" fill="none" stroke="#333" stroke-width="3.6"/><path d="M13 1Q5 0 4 4" fill="none" stroke="#888" stroke-width="1.2"/></svg></body></html>
